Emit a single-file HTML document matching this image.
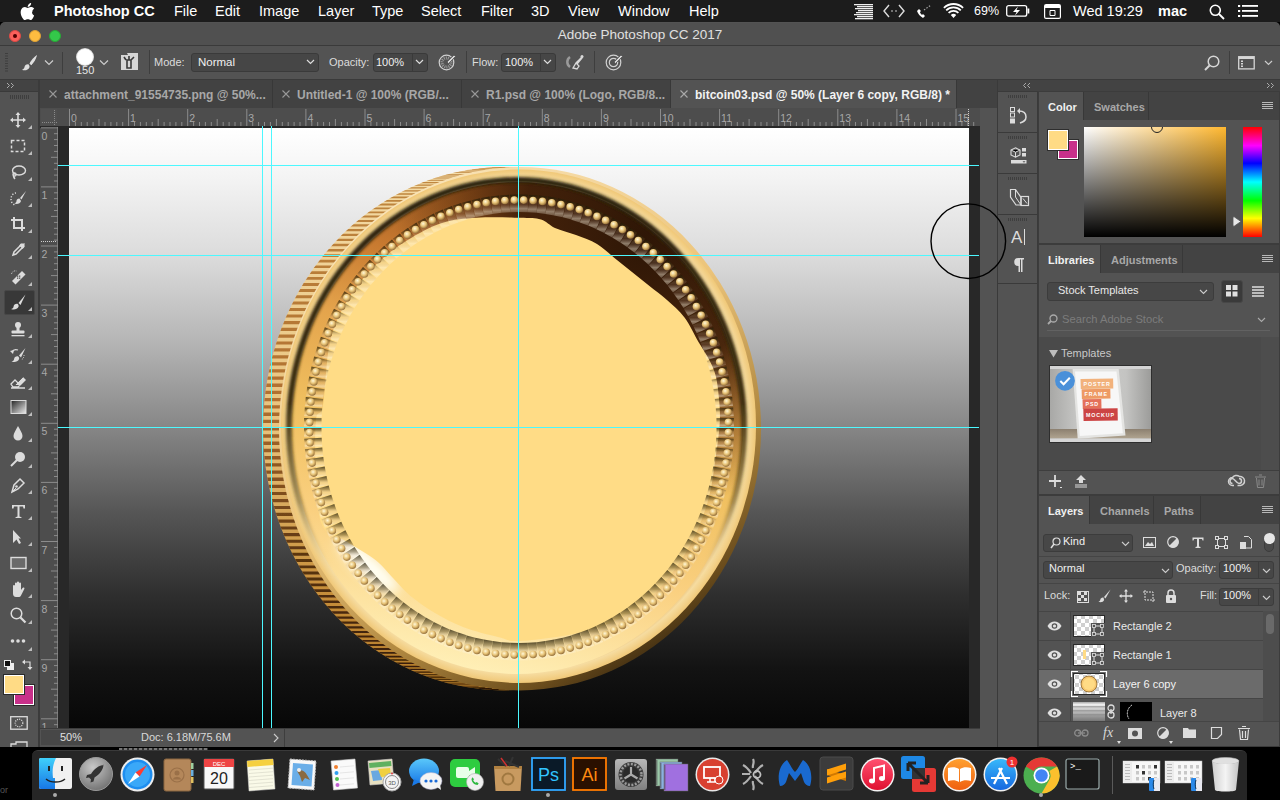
<!DOCTYPE html>
<html><head><meta charset="utf-8">
<style>
*{margin:0;padding:0;box-sizing:border-box}
html,body{width:1280px;height:800px;overflow:hidden;background:#000;font-family:"Liberation Sans",sans-serif;}
.a{position:absolute}
.t{position:absolute;white-space:nowrap;line-height:1}
svg{position:absolute;overflow:visible}
</style></head><body>

<div class="a" style="left:0;top:0;width:1280px;height:22px;background:#1c1c1c"></div>
<div class="t" style="left:54px;top:4px;font-size:14.5px;color:#fff;font-weight:bold;">Photoshop CC</div>
<div class="t" style="left:174px;top:4px;font-size:14.5px;color:#fff;">File</div>
<div class="t" style="left:215px;top:4px;font-size:14.5px;color:#fff;">Edit</div>
<div class="t" style="left:259px;top:4px;font-size:14.5px;color:#fff;">Image</div>
<div class="t" style="left:318px;top:4px;font-size:14.5px;color:#fff;">Layer</div>
<div class="t" style="left:372px;top:4px;font-size:14.5px;color:#fff;">Type</div>
<div class="t" style="left:421px;top:4px;font-size:14.5px;color:#fff;">Select</div>
<div class="t" style="left:481px;top:4px;font-size:14.5px;color:#fff;">Filter</div>
<div class="t" style="left:531px;top:4px;font-size:14.5px;color:#fff;">3D</div>
<div class="t" style="left:568px;top:4px;font-size:14.5px;color:#fff;">View</div>
<div class="t" style="left:618px;top:4px;font-size:14.5px;color:#fff;">Window</div>
<div class="t" style="left:689px;top:4px;font-size:14.5px;color:#fff;">Help</div>
<svg style="left:20px;top:3px" width="15" height="17" viewBox="0 0 15 17"><path fill="#fff" d="M12.3 9.1c0-2.2 1.8-3.2 1.9-3.3-1-1.5-2.6-1.7-3.2-1.7-1.4-.1-2.6.8-3.3.8-.7 0-1.7-.8-2.8-.8C3.5 4.1 2.2 5 1.4 6.3c-1.5 2.6-.4 6.5 1.1 8.6.7 1 1.5 2.2 2.6 2.1 1.1 0 1.4-.7 2.7-.7s1.6.7 2.7.7c1.1 0 1.8-1 2.5-2.1.8-1.200 1.1-2.300 1.1-2.400 0 0-2.100-.8-2.100-3.400zM10.2 2.800c.6-.7 1-1.700.9-2.700-.9 0-1.900.6-2.500 1.300-.5.600-1 1.600-.9 2.600 1 .1 1.900-.5 2.500-1.200z"/></svg>
<div class="t" style="left:974px;top:5px;font-size:12.5px;color:#fff">69%</div>
<div class="t" style="left:1073px;top:4px;font-size:14.5px;color:#fff">Wed 19:29</div>
<div class="t" style="left:1158px;top:4px;font-size:14.5px;color:#fff;font-weight:bold">mac</div>
<svg style="left:854px;top:4px" width="20" height="15"><rect x="0" y="0" width="19" height="1.3" fill="#eee"/><rect x="3" y="2" width="16" height="1.3" fill="#eee"/><rect x="1" y="4" width="18" height="1.3" fill="#eee"/><rect x="4" y="6" width="15" height="1.3" fill="#eee"/><rect x="2" y="8" width="17" height="1.3" fill="#eee"/><rect x="0" y="10" width="19" height="1.3" fill="#eee"/><rect x="3" y="12" width="16" height="1.3" fill="#eee"/><rect x="1" y="14" width="18" height="1.3" fill="#eee"/></svg>
<svg style="left:883px;top:4px" width="22" height="14"><path d="M6 1L1 7l5 6M16 1l5 6-5 6" stroke="#ddd" stroke-width="1.4" fill="none"/><circle cx="9" cy="7" r=".8" fill="#ddd"/><circle cx="13" cy="7" r=".8" fill="#ddd"/></svg>
<svg style="left:915px;top:4px" width="18" height="15"><path d="M2 7c1 3 3 5 6 7l2-2-2-2-1 1c-1-1-2-2-2-3l1-1-2-2z" fill="#fff"/><path d="M9 6l7-5" stroke="#aaa" stroke-width="1.2" stroke-dasharray="1.5 1.5"/></svg>
<svg style="left:943px;top:4px" width="21" height="15"><path d="M10.5 14L7.8 11a3.8 3.8 0 0 1 5.4 0z" fill="#fff"/><path d="M5.6 8.8a7 7 0 0 1 9.800 0M3.200 6.300a10.500 10.500 0 0 1 14.600 0M0.900 3.800a14 14 0 0 1 19.200 0" stroke="#fff" stroke-width="1.8" fill="none"/></svg>
<svg style="left:1006px;top:5px" width="24" height="12"><rect x=".7" y=".7" width="20" height="10.5" rx="2" stroke="#fff" stroke-width="1.3" fill="none"/><rect x="21.5" y="3.5" width="1.8" height="5" fill="#fff"/><path d="M12 1.5L7 7h3.5L9 10.5 14 5h-3.5z" fill="#fff"/></svg>
<svg style="left:1044px;top:4px" width="17" height="15"><rect x=".6" y=".6" width="15.8" height="13.8" rx="1.5" stroke="#fff" stroke-width="1.2" fill="none"/><rect x="1" y="1" width="15" height="3" fill="#fff"/><path d="M6 6.5h5v5H6z" stroke="#fff" stroke-width="1" fill="none"/></svg>
<svg style="left:1209px;top:4px" width="16" height="16"><circle cx="6.300" cy="6.300" r="5" stroke="#fff" stroke-width="1.6" fill="none"/><path d="M10 10l5 5" stroke="#fff" stroke-width="1.8"/></svg>
<svg style="left:1238px;top:4px" width="20" height="14"><g fill="#fff"><rect x="0" y="1" width="2.2" height="2"/><rect x="0" y="6" width="2.2" height="2"/><rect x="0" y="11" width="2.2" height="2"/><rect x="4" y="1" width="16" height="1.800"/><rect x="4" y="6" width="16" height="1.800"/><rect x="4" y="11" width="16" height="1.800"/></g></svg>
<div class="a" style="left:0;top:22px;width:1280px;height:725px;background:#535353;border-radius:5px 5px 0 0"></div>
<div class="a" style="left:0;top:23px;width:1280px;height:22px;background:#505050;border-radius:5px 5px 0 0"></div>
<div class="a" style="left:0;top:45px;width:1280px;height:1px;background:#3a3a3a"></div>
<div class="t" style="left:0;width:1280px;text-align:center;top:28px;font-size:13.5px;color:#e0e0e0">Adobe Photoshop CC 2017</div>
<div class="a" style="left:9px;top:30px;width:12px;height:12px;border-radius:50%;background:#fc605b;border:.5px solid #de4a45"></div>
<div class="a" style="left:29px;top:30px;width:12px;height:12px;border-radius:50%;background:#fdbc40;border:.5px solid #dea236"></div>
<div class="a" style="left:49px;top:30px;width:12px;height:12px;border-radius:50%;background:#34c84a;border:.5px solid #27aa35"></div>
<div class="a" style="left:13px;top:34px;width:4px;height:4px;border-radius:50%;background:#4d0000"></div>
<div class="a" style="left:0;top:46px;width:1280px;height:33px;background:#535353"></div>
<div class="a" style="left:0;top:79px;width:1280px;height:1px;background:#3a3a3a"></div>
<svg style="left:5px;top:53px" width="4" height="19"><rect x="0" y="0.0" width="3" height="1" fill="#3e3e3e"/><rect x="0" y="2.5" width="3" height="1" fill="#3e3e3e"/><rect x="0" y="5.0" width="3" height="1" fill="#3e3e3e"/><rect x="0" y="7.5" width="3" height="1" fill="#3e3e3e"/><rect x="0" y="10.0" width="3" height="1" fill="#3e3e3e"/><rect x="0" y="12.5" width="3" height="1" fill="#3e3e3e"/><rect x="0" y="15.0" width="3" height="1" fill="#3e3e3e"/><rect x="0" y="17.5" width="3" height="1" fill="#3e3e3e"/></svg>
<svg style="left:21px;top:54px" width="17" height="17" viewBox="0 0 17 17"><path d="M16 1L8.500 9.500 10.300 11.200z" fill="#dedede"/><path d="M7.500 10.200c-2.200-.3-3.800 1-4 2.800-.2 1.500-1.200 2.500-2.700 2.800 3 1.200 6.500.300 7.600-2.300.4-1 .1-2.100-.9-3.300z" fill="#dedede"/><path d="M16 1C13 3 10 6 8.700 9.300l1.600 1.600C13 9 15 5 16 1z" fill="#dedede"/></svg>
<svg style="left:44px;top:59px" width="10" height="7"><path d="M1 1.500l4 4 4-4" stroke="#ccc" stroke-width="1.2" fill="none"/></svg>
<div class="a" style="left:62px;top:52px;width:1px;height:22px;background:#3e3e3e"></div>
<div class="a" style="left:76px;top:48px;width:18px;height:18px;border-radius:50%;background:radial-gradient(circle,#fff 0%,#fff 58%,rgba(230,230,230,.7) 75%,rgba(200,200,200,0) 100%)"></div>
<div class="t" style="left:76px;top:65px;font-size:11px;color:#e6e6e6">150</div>
<svg style="left:99px;top:59px" width="10" height="7"><path d="M1 1.500l4 4 4-4" stroke="#ccc" stroke-width="1.2" fill="none"/></svg>
<div class="a" style="left:121px;top:53px;width:17px;height:17px;background:#d6d6d6"></div>
<svg style="left:121px;top:53px" width="17" height="17"><path d="M0 0h6l1 2H0z" fill="#535353"/><path d="M6 7v8h4V7zM5 7L3 4M8 7V3M10 7l3-3" stroke="#3a3a3a" stroke-width="1.6" fill="none"/></svg>
<div class="a" style="left:149px;top:50px;width:1px;height:24px;background:#3e3e3e"></div>
<div class="t" style="left:154px;top:57px;font-size:11px;color:#dcdcdc">Mode:</div>
<div class="a" style="left:191px;top:53px;width:128px;height:19px;background:#464646;border:1px solid #3a3a3a;border-radius:3px"></div>
<div class="t" style="left:198px;top:57px;font-size:11.5px;color:#f0f0f0">Normal</div>
<svg style="left:306px;top:59px" width="9" height="6"><path d="M1 1l3.500 3.500L8 1" stroke="#ddd" stroke-width="1.2" fill="none"/></svg>
<div class="t" style="left:329px;top:57px;font-size:11px;color:#dcdcdc">Opacity:</div>
<div class="a" style="left:373px;top:53px;width:55px;height:19px;background:#464646;border:1px solid #3a3a3a;border-radius:3px"></div>
<div class="a" style="left:412px;top:54px;width:1px;height:17px;background:#3a3a3a"></div>
<div class="t" style="left:376px;top:57px;font-size:11px;color:#f0f0f0">100%</div>
<svg style="left:415px;top:59px" width="9" height="6"><path d="M1 1l3.500 3.500L8 1" stroke="#ddd" stroke-width="1.2" fill="none"/></svg>
<svg style="left:438px;top:53px" width="18" height="18"><circle cx="8.500" cy="9.500" r="7.300" stroke="#d0d0d0" stroke-width="1.200" fill="none"/><circle cx="8.500" cy="9.500" r="4.500" stroke="#9a9a9a" stroke-width="3" fill="none" stroke-dasharray="1 1"/><path d="M9 9l7-7 1.500 1.500-7 7z" fill="#d8d8d8" stroke="#535353" stroke-width=".8"/></svg>
<div class="a" style="left:466px;top:51px;width:1px;height:22px;background:#3e3e3e"></div>
<div class="t" style="left:472px;top:57px;font-size:11px;color:#dcdcdc">Flow:</div>
<div class="a" style="left:501px;top:53px;width:55px;height:19px;background:#464646;border:1px solid #3a3a3a;border-radius:3px"></div>
<div class="a" style="left:540px;top:54px;width:1px;height:17px;background:#3a3a3a"></div>
<div class="t" style="left:505px;top:57px;font-size:11px;color:#f0f0f0">100%</div>
<svg style="left:543px;top:59px" width="9" height="6"><path d="M1 1l3.500 3.500L8 1" stroke="#ddd" stroke-width="1.2" fill="none"/></svg>
<svg style="left:565px;top:54px" width="20" height="17"><path d="M5 3a6 6 0 0 0 0 10" stroke="#9a9a9a" stroke-width="2.500" fill="none"/><path d="M17 3l-6 6-3 5 4 1 2-3-2-2 5-6z" stroke="#d8d8d8" stroke-width="1.300" fill="none"/><circle cx="17" cy="2.500" r="1.500" fill="#d8d8d8"/></svg>
<div class="a" style="left:594px;top:51px;width:1px;height:22px;background:#3e3e3e"></div>
<svg style="left:605px;top:53px" width="18" height="18"><circle cx="8.500" cy="9.500" r="7.300" stroke="#d0d0d0" stroke-width="1.200" fill="none"/><circle cx="8.500" cy="9.500" r="4.200" stroke="#d0d0d0" stroke-width="1.200" fill="none"/><path d="M9 9l7-7 1.500 1.500-7 7z" fill="#d8d8d8" stroke="#535353" stroke-width=".8"/></svg>
<svg style="left:1204px;top:55px" width="16" height="16"><circle cx="9.500" cy="6.500" r="5.300" stroke="#d6d6d6" stroke-width="1.500" fill="none"/><path d="M5.500 10.500L1 15" stroke="#d6d6d6" stroke-width="2"/></svg>
<div class="a" style="left:1229px;top:51px;width:1px;height:23px;background:#3e3e3e"></div>
<svg style="left:1238px;top:56px" width="17" height="14"><rect x=".7" y=".7" width="15.500" height="12.200" stroke="#d6d6d6" stroke-width="1.300" fill="none"/><rect x="1" y="1" width="15" height="2" fill="#d6d6d6"/><rect x="3" y="4.500" width="2" height="1.500" fill="#d6d6d6"/><rect x="3" y="7" width="2" height="1.500" fill="#d6d6d6"/><rect x="3" y="9.500" width="2" height="1.500" fill="#d6d6d6"/></svg>
<svg style="left:1264px;top:60px" width="9" height="6"><path d="M1 1l3.500 3.500L8 1" stroke="#ccc" stroke-width="1.200" fill="none"/></svg>
<div class="a" style="left:0;top:80px;width:38px;height:11px;background:#434343"></div>
<div class="a" style="left:0;top:91px;width:38px;height:1px;background:#3a3a3a"></div>
<div class="a" style="left:38px;top:80px;width:2px;height:667px;background:#3b3b3b"></div>
<svg style="left:6px;top:82px" width="9" height="7"><path d="M1 1l2.500 2.500L1 6M5 1l2.500 2.500L5 6" stroke="#aaa" stroke-width="1" fill="none"/></svg>
<svg style="left:10px;top:95px" width="20" height="5"><rect x="0" y="0" width="1" height="4" fill="#3e3e3e"/><rect x="2" y="0" width="1" height="4" fill="#3e3e3e"/><rect x="4" y="0" width="1" height="4" fill="#3e3e3e"/><rect x="6" y="0" width="1" height="4" fill="#3e3e3e"/><rect x="8" y="0" width="1" height="4" fill="#3e3e3e"/><rect x="10" y="0" width="1" height="4" fill="#3e3e3e"/><rect x="12" y="0" width="1" height="4" fill="#3e3e3e"/><rect x="14" y="0" width="1" height="4" fill="#3e3e3e"/><rect x="16" y="0" width="1" height="4" fill="#3e3e3e"/><rect x="18" y="0" width="1" height="4" fill="#3e3e3e"/></svg>
<div class="a" style="left:4px;top:290px;width:31px;height:25px;background:#383838;border:1px solid #474747;border-radius:2px"></div>
<svg style="left:10px;top:112px" width="17" height="17" viewBox="0 0 17 17"><path d="M8 1v14M1 8h14" stroke="#dcdcdc" stroke-width="1.600"/><path d="M8 0l-2.500 3h5zM8 16l-2.500-3h5zM0 8l3-2.500v5zM16 8l-3-2.500v5z" fill="#dcdcdc"/></svg>
<svg style="left:28px;top:125px" width="4" height="4"><path d="M4 0v4H0z" fill="#bdbdbd"/></svg>
<svg style="left:10px;top:138px" width="17" height="17" viewBox="0 0 17 17"><rect x="1.500" y="2.500" width="13" height="11" stroke="#dcdcdc" stroke-width="1.500" fill="none" stroke-dasharray="3 2"/></svg>
<svg style="left:28px;top:151px" width="4" height="4"><path d="M4 0v4H0z" fill="#bdbdbd"/></svg>
<svg style="left:10px;top:164px" width="17" height="17" viewBox="0 0 17 17"><ellipse cx="9" cy="6.500" rx="6.500" ry="4.500" stroke="#dcdcdc" stroke-width="1.400" fill="none"/><path d="M4 10c-1 2 0 4 1 5" stroke="#dcdcdc" stroke-width="1.400" fill="none"/><circle cx="4.500" cy="10.500" r="1.600" stroke="#dcdcdc" stroke-width="1.200" fill="none"/></svg>
<svg style="left:28px;top:177px" width="4" height="4"><path d="M4 0v4H0z" fill="#bdbdbd"/></svg>
<svg style="left:10px;top:190px" width="17" height="17" viewBox="0 0 17 17"><path d="M6 3a5 6 0 1 0 0 12" stroke="#dcdcdc" stroke-width="1.400" fill="none" stroke-dasharray="1.200 1.600"/><path d="M16 1l-6 7 1.500 1.500z" fill="#dcdcdc"/><path d="M9.500 8.500c-2 0-3 1.200-3 2.500 0 1.200-1 2-2 2.500 2.500 1 6 0 6.500-2.500z" fill="#dcdcdc"/></svg>
<svg style="left:28px;top:203px" width="4" height="4"><path d="M4 0v4H0z" fill="#bdbdbd"/></svg>
<svg style="left:10px;top:216px" width="17" height="17" viewBox="0 0 17 17"><path d="M4 1v11h11M1 4h11v11" stroke="#dcdcdc" stroke-width="2" fill="none"/></svg>
<svg style="left:28px;top:229px" width="4" height="4"><path d="M4 0v4H0z" fill="#bdbdbd"/></svg>
<svg style="left:10px;top:242px" width="17" height="17" viewBox="0 0 17 17"><path d="M14.500 1.500l-3 3M12 2l2 2-8 8-3 1 1-3z" stroke="#dcdcdc" stroke-width="1.500" fill="none"/><path d="M10 2.500l3.500 3.500" stroke="#dcdcdc" stroke-width="2.500"/></svg>
<svg style="left:28px;top:255px" width="4" height="4"><path d="M4 0v4H0z" fill="#bdbdbd"/></svg>
<svg style="left:10px;top:269px" width="17" height="17" viewBox="0 0 17 17"><path d="M2 12l10-10 3.500 3.500-10 10z" fill="#dcdcdc"/><g fill="#535353"><rect x="7" y="6.500" width="1.300" height="1.300"/><rect x="9" y="6.500" width="1.300" height="1.300"/><rect x="7" y="8.500" width="1.300" height="1.300"/><rect x="9" y="8.500" width="1.300" height="1.300"/></g><path d="M1.500 5a4 4 0 0 1 5-3" stroke="#dcdcdc" stroke-width="1" fill="none" stroke-dasharray="1 1"/></svg>
<svg style="left:28px;top:282px" width="4" height="4"><path d="M4 0v4H0z" fill="#bdbdbd"/></svg>
<svg style="left:10px;top:294px" width="17" height="17" viewBox="0 0 17 17"><path d="M15.500 .5L8.500 9l2 2z" fill="#dcdcdc"/><path d="M7.500 9.800c-2.200-.300-3.600 1-3.900 2.600-.2 1.500-1.100 2.300-2.600 2.600 3 1.200 6.300.3 7.500-2.200.4-1 .1-2-1-3z" fill="#dcdcdc"/></svg>
<svg style="left:28px;top:307px" width="4" height="4"><path d="M4 0v4H0z" fill="#bdbdbd"/></svg>
<svg style="left:10px;top:321px" width="17" height="17" viewBox="0 0 17 17"><circle cx="8" cy="4" r="3" fill="#dcdcdc"/><rect x="6.500" y="6" width="3" height="4" fill="#dcdcdc"/><rect x="1.500" y="9.500" width="13" height="3" rx="1" fill="#dcdcdc"/><rect x="1.500" y="14" width="13" height="1.300" fill="#dcdcdc"/></svg>
<svg style="left:28px;top:334px" width="4" height="4"><path d="M4 0v4H0z" fill="#bdbdbd"/></svg>
<svg style="left:10px;top:347px" width="17" height="17" viewBox="0 0 17 17"><path d="M15.500 1L9 8.500l2 2z" fill="#dcdcdc"/><path d="M8 9.300c-2.200-.3-3.600 1-3.900 2.600-.2 1.500-1.100 2.300-2.600 2.600 3 1.200 6.300.3 7.500-2.200.4-1 .1-2-1-3z" fill="#dcdcdc"/><path d="M8 3C5 2 3 3 2 5" stroke="#dcdcdc" stroke-width="1.300" fill="none"/><path d="M0 4l3 3 1-4z" fill="#dcdcdc"/><path d="M14 8a5 5 0 0 1-3 5" stroke="#dcdcdc" stroke-width="1" stroke-dasharray="1 1" fill="none"/></svg>
<svg style="left:28px;top:360px" width="4" height="4"><path d="M4 0v4H0z" fill="#bdbdbd"/></svg>
<svg style="left:10px;top:373px" width="17" height="17" viewBox="0 0 17 17"><path d="M5 12L13 4l3 3-5 5z" fill="#dcdcdc"/><path d="M5 12L13 4" stroke="#535353" stroke-width=".8"/><path d="M1 11l4-4 5 5-2 2H3zM1 15h14" stroke="#dcdcdc" stroke-width="1.300" fill="none"/></svg>
<svg style="left:28px;top:386px" width="4" height="4"><path d="M4 0v4H0z" fill="#bdbdbd"/></svg>
<svg style="left:10px;top:399px" width="17" height="17" viewBox="0 0 17 17"><defs><linearGradient id="tg" x1="0" y1="0" x2="1" y2="1"><stop offset="0" stop-color="#222"/><stop offset="1" stop-color="#eee"/></linearGradient></defs><rect x="1" y="1.500" width="15" height="13" fill="url(#tg)" stroke="#dcdcdc" stroke-width="1"/></svg>
<svg style="left:28px;top:412px" width="4" height="4"><path d="M4 0v4H0z" fill="#bdbdbd"/></svg>
<svg style="left:10px;top:425px" width="17" height="17" viewBox="0 0 17 17"><path d="M8 1C6 5 3.500 8 3.500 11a4.500 4.500 0 0 0 9 0C12.500 8 10 5 8 1z" fill="#dcdcdc"/></svg>
<svg style="left:28px;top:438px" width="4" height="4"><path d="M4 0v4H0z" fill="#bdbdbd"/></svg>
<svg style="left:10px;top:451px" width="17" height="17" viewBox="0 0 17 17"><circle cx="10" cy="6" r="5" fill="#dcdcdc"/><path d="M7 9l-6 6" stroke="#dcdcdc" stroke-width="2"/></svg>
<svg style="left:28px;top:464px" width="4" height="4"><path d="M4 0v4H0z" fill="#bdbdbd"/></svg>
<svg style="left:10px;top:477px" width="17" height="17" viewBox="0 0 17 17"><path d="M2 15l2-7 6-6 4 4-6 6z" stroke="#dcdcdc" stroke-width="1.500" fill="none"/><circle cx="6.500" cy="9.500" r="1.300" fill="#dcdcdc"/><path d="M2 15l4-4" stroke="#dcdcdc" stroke-width="1"/></svg>
<svg style="left:28px;top:490px" width="4" height="4"><path d="M4 0v4H0z" fill="#bdbdbd"/></svg>
<svg style="left:10px;top:503px" width="17" height="17" viewBox="0 0 17 17"><path d="M2 2h13v3.500h-1.500L13 3.500H9.500v10l2 .8V15H5.500v-.700l2-.800v-10H4l-.500 2H2z" fill="#dcdcdc"/></svg>
<svg style="left:28px;top:516px" width="4" height="4"><path d="M4 0v4H0z" fill="#bdbdbd"/></svg>
<svg style="left:10px;top:529px" width="17" height="17" viewBox="0 0 17 17"><path d="M3 1v13l3.500-3.500L9 15l2-1-2.500-4.500H11z" fill="#dcdcdc"/></svg>
<svg style="left:28px;top:542px" width="4" height="4"><path d="M4 0v4H0z" fill="#bdbdbd"/></svg>
<svg style="left:10px;top:555px" width="17" height="17" viewBox="0 0 17 17"><rect x="1" y="2.500" width="15" height="11" stroke="#dcdcdc" stroke-width="1.400" fill="#6a6a6a"/></svg>
<svg style="left:28px;top:568px" width="4" height="4"><path d="M4 0v4H0z" fill="#bdbdbd"/></svg>
<svg style="left:10px;top:581px" width="17" height="17" viewBox="0 0 17 17"><path d="M3 9V5a1 1 0 0 1 2 0v3V2.500a1 1 0 0 1 2 0V8V1.500a1 1 0 0 1 2 0V8V2.500a1 1 0 0 1 2 0V9l1.500-2a1 1 0 0 1 1.800 1L11 14.500c-.5 1-1.500 1.500-2.500 1.500H6c-2 0-3-1.500-3-3.500z" fill="#dcdcdc"/></svg>
<svg style="left:28px;top:594px" width="4" height="4"><path d="M4 0v4H0z" fill="#bdbdbd"/></svg>
<svg style="left:10px;top:607px" width="17" height="17" viewBox="0 0 17 17"><circle cx="6.500" cy="6.500" r="5.300" stroke="#dcdcdc" stroke-width="1.500" fill="none"/><path d="M10.500 10.500L15.500 15.500" stroke="#dcdcdc" stroke-width="2.200"/></svg>
<svg style="left:28px;top:620px" width="4" height="4"><path d="M4 0v4H0z" fill="#bdbdbd"/></svg>
<svg style="left:10px;top:633px" width="17" height="17" viewBox="0 0 17 17"><circle cx="2.500" cy="8" r="1.800" fill="#dcdcdc"/><circle cx="8" cy="8" r="1.800" fill="#dcdcdc"/><circle cx="13.500" cy="8" r="1.800" fill="#dcdcdc"/></svg>
<svg style="left:28px;top:647px" width="4" height="4"><path d="M4 0v4H0z" fill="#bdbdbd"/></svg>
<div class="a" style="left:7px;top:663px;width:7px;height:7px;background:#eee"></div>
<div class="a" style="left:4px;top:660px;width:7px;height:7px;background:#111;border:1px solid #eee"></div>
<svg style="left:22px;top:659px" width="11" height="11"><path d="M2 3h6v6" stroke="#ddd" stroke-width="1.200" fill="none"/><path d="M0 3l3-2.500v5zM8 11l-2.500-3h5z" fill="#ddd"/></svg>
<div class="a" style="left:14px;top:685px;width:20px;height:20px;background:#c8308a;border:1px solid #fff;outline:1px solid #2a2a2a"></div>
<div class="a" style="left:4px;top:675px;width:20px;height:19px;background:#ffdb85;border:1px solid #fff;outline:1px solid #2a2a2a"></div>
<svg style="left:10px;top:716px" width="18" height="14"><rect x=".700" y=".700" width="16.500" height="12.500" stroke="#dcdcdc" stroke-width="1.300" fill="none"/><circle cx="9" cy="7" r="3.800" stroke="#dcdcdc" stroke-width="1.200" fill="none" stroke-dasharray="1.100 1.100"/></svg>
<svg style="left:10px;top:741px" width="18" height="6"><path d="M1 6V3h5V1h11v5" stroke="#dcdcdc" stroke-width="1.300" fill="none"/></svg>
<div class="a" style="left:40px;top:80px;width:958px;height:28px;background:#424242"></div>
<div class="a" style="left:40px;top:80px;width:233px;height:28px;background:#424242;border-right:1px solid #383838"></div>
<svg style="left:49px;top:90px" width="8" height="8"><path d="M.5 .5l7 7M7.5 .5l-7 7" stroke="#999" stroke-width="1.100"/></svg>
<div class="t" style="left:64px;top:89px;font-size:12px;font-weight:bold;color:#a8a8a8">attachment_91554735.png @ 50%...</div>
<div class="a" style="left:273px;top:80px;width:189px;height:28px;background:#424242;border-right:1px solid #383838"></div>
<svg style="left:282px;top:90px" width="8" height="8"><path d="M.5 .5l7 7M7.5 .5l-7 7" stroke="#999" stroke-width="1.100"/></svg>
<div class="t" style="left:297px;top:89px;font-size:12px;font-weight:bold;color:#a8a8a8">Untitled-1 @ 100% (RGB/...</div>
<div class="a" style="left:462px;top:80px;width:209px;height:28px;background:#424242;border-right:1px solid #383838"></div>
<svg style="left:471px;top:90px" width="8" height="8"><path d="M.5 .5l7 7M7.5 .5l-7 7" stroke="#999" stroke-width="1.100"/></svg>
<div class="t" style="left:486px;top:89px;font-size:12px;font-weight:bold;color:#a8a8a8">R1.psd @ 100% (Logo, RGB/8...</div>
<div class="a" style="left:671px;top:80px;width:286px;height:28px;background:#535353;border-right:1px solid #383838"></div>
<svg style="left:680px;top:90px" width="8" height="8"><path d="M.5 .5l7 7M7.5 .5l-7 7" stroke="#aaa" stroke-width="1.100"/></svg>
<div class="t" style="left:695px;top:89px;font-size:12px;font-weight:bold;color:#f2f2f2">bitcoin03.psd @ 50% (Layer 6 copy, RGB/8) *</div>
<div class="a" style="left:40px;top:108px;width:940px;height:19px;background:#4d4d4d"></div>
<div class="a" style="left:40px;top:108px;width:18px;height:620px;background:#4d4d4d"></div>
<div class="a" style="left:41px;top:109px;width:16px;height:16px;background:#505050"></div>
<svg style="left:41px;top:109px" width="17" height="17"><path d="M13.500 1v15M1 13.500h15" stroke="#8a8a8a" stroke-width="1" stroke-dasharray="1 1"/></svg>
<div class="a" style="left:40px;top:126px;width:940px;height:2px;background:#2a2a2a"></div>
<div class="a" style="left:57px;top:127px;width:1px;height:601px;background:#7a7a7a"></div>
<svg style="left:0;top:0;clip-path:inset(108px 0 72px 0)" width="1280" height="800"><path d="M69.5 109v17" stroke="#8c8c8c" stroke-width="1"/><text x="71.0" y="122" font-size="10.5" fill="#a8a8a8" font-family="Liberation Sans">0</text><path d="M75.4 122v4" stroke="#8c8c8c" stroke-width="1"/><path d="M81.3 122v4" stroke="#8c8c8c" stroke-width="1"/><path d="M87.2 122v4" stroke="#8c8c8c" stroke-width="1"/><path d="M93.1 122v4" stroke="#8c8c8c" stroke-width="1"/><path d="M99.0 119v7" stroke="#8c8c8c" stroke-width="1"/><path d="M105.0 122v4" stroke="#8c8c8c" stroke-width="1"/><path d="M110.9 122v4" stroke="#8c8c8c" stroke-width="1"/><path d="M116.8 122v4" stroke="#8c8c8c" stroke-width="1"/><path d="M122.7 122v4" stroke="#8c8c8c" stroke-width="1"/><path d="M128.6 109v17" stroke="#8c8c8c" stroke-width="1"/><text x="130.1" y="122" font-size="10.5" fill="#a8a8a8" font-family="Liberation Sans">1</text><path d="M134.5 122v4" stroke="#8c8c8c" stroke-width="1"/><path d="M140.4 122v4" stroke="#8c8c8c" stroke-width="1"/><path d="M146.3 122v4" stroke="#8c8c8c" stroke-width="1"/><path d="M152.2 122v4" stroke="#8c8c8c" stroke-width="1"/><path d="M158.2 119v7" stroke="#8c8c8c" stroke-width="1"/><path d="M164.1 122v4" stroke="#8c8c8c" stroke-width="1"/><path d="M170.0 122v4" stroke="#8c8c8c" stroke-width="1"/><path d="M175.9 122v4" stroke="#8c8c8c" stroke-width="1"/><path d="M181.8 122v4" stroke="#8c8c8c" stroke-width="1"/><path d="M187.7 109v17" stroke="#8c8c8c" stroke-width="1"/><text x="189.2" y="122" font-size="10.5" fill="#a8a8a8" font-family="Liberation Sans">2</text><path d="M193.6 122v4" stroke="#8c8c8c" stroke-width="1"/><path d="M199.5 122v4" stroke="#8c8c8c" stroke-width="1"/><path d="M205.4 122v4" stroke="#8c8c8c" stroke-width="1"/><path d="M211.3 122v4" stroke="#8c8c8c" stroke-width="1"/><path d="M217.2 119v7" stroke="#8c8c8c" stroke-width="1"/><path d="M223.2 122v4" stroke="#8c8c8c" stroke-width="1"/><path d="M229.1 122v4" stroke="#8c8c8c" stroke-width="1"/><path d="M235.0 122v4" stroke="#8c8c8c" stroke-width="1"/><path d="M240.9 122v4" stroke="#8c8c8c" stroke-width="1"/><path d="M246.8 109v17" stroke="#8c8c8c" stroke-width="1"/><text x="248.3" y="122" font-size="10.5" fill="#a8a8a8" font-family="Liberation Sans">3</text><path d="M252.7 122v4" stroke="#8c8c8c" stroke-width="1"/><path d="M258.6 122v4" stroke="#8c8c8c" stroke-width="1"/><path d="M264.5 122v4" stroke="#8c8c8c" stroke-width="1"/><path d="M270.4 122v4" stroke="#8c8c8c" stroke-width="1"/><path d="M276.4 119v7" stroke="#8c8c8c" stroke-width="1"/><path d="M282.3 122v4" stroke="#8c8c8c" stroke-width="1"/><path d="M288.2 122v4" stroke="#8c8c8c" stroke-width="1"/><path d="M294.1 122v4" stroke="#8c8c8c" stroke-width="1"/><path d="M300.0 122v4" stroke="#8c8c8c" stroke-width="1"/><path d="M305.9 109v17" stroke="#8c8c8c" stroke-width="1"/><text x="307.4" y="122" font-size="10.5" fill="#a8a8a8" font-family="Liberation Sans">4</text><path d="M311.8 122v4" stroke="#8c8c8c" stroke-width="1"/><path d="M317.7 122v4" stroke="#8c8c8c" stroke-width="1"/><path d="M323.6 122v4" stroke="#8c8c8c" stroke-width="1"/><path d="M329.5 122v4" stroke="#8c8c8c" stroke-width="1"/><path d="M335.4 119v7" stroke="#8c8c8c" stroke-width="1"/><path d="M341.4 122v4" stroke="#8c8c8c" stroke-width="1"/><path d="M347.3 122v4" stroke="#8c8c8c" stroke-width="1"/><path d="M353.2 122v4" stroke="#8c8c8c" stroke-width="1"/><path d="M359.1 122v4" stroke="#8c8c8c" stroke-width="1"/><path d="M365.0 109v17" stroke="#8c8c8c" stroke-width="1"/><text x="366.5" y="122" font-size="10.5" fill="#a8a8a8" font-family="Liberation Sans">5</text><path d="M370.9 122v4" stroke="#8c8c8c" stroke-width="1"/><path d="M376.8 122v4" stroke="#8c8c8c" stroke-width="1"/><path d="M382.7 122v4" stroke="#8c8c8c" stroke-width="1"/><path d="M388.6 122v4" stroke="#8c8c8c" stroke-width="1"/><path d="M394.6 119v7" stroke="#8c8c8c" stroke-width="1"/><path d="M400.5 122v4" stroke="#8c8c8c" stroke-width="1"/><path d="M406.4 122v4" stroke="#8c8c8c" stroke-width="1"/><path d="M412.3 122v4" stroke="#8c8c8c" stroke-width="1"/><path d="M418.2 122v4" stroke="#8c8c8c" stroke-width="1"/><path d="M424.1 109v17" stroke="#8c8c8c" stroke-width="1"/><text x="425.6" y="122" font-size="10.5" fill="#a8a8a8" font-family="Liberation Sans">6</text><path d="M430.0 122v4" stroke="#8c8c8c" stroke-width="1"/><path d="M435.9 122v4" stroke="#8c8c8c" stroke-width="1"/><path d="M441.8 122v4" stroke="#8c8c8c" stroke-width="1"/><path d="M447.7 122v4" stroke="#8c8c8c" stroke-width="1"/><path d="M453.6 119v7" stroke="#8c8c8c" stroke-width="1"/><path d="M459.6 122v4" stroke="#8c8c8c" stroke-width="1"/><path d="M465.5 122v4" stroke="#8c8c8c" stroke-width="1"/><path d="M471.4 122v4" stroke="#8c8c8c" stroke-width="1"/><path d="M477.3 122v4" stroke="#8c8c8c" stroke-width="1"/><path d="M483.2 109v17" stroke="#8c8c8c" stroke-width="1"/><text x="484.7" y="122" font-size="10.5" fill="#a8a8a8" font-family="Liberation Sans">7</text><path d="M489.1 122v4" stroke="#8c8c8c" stroke-width="1"/><path d="M495.0 122v4" stroke="#8c8c8c" stroke-width="1"/><path d="M500.9 122v4" stroke="#8c8c8c" stroke-width="1"/><path d="M506.8 122v4" stroke="#8c8c8c" stroke-width="1"/><path d="M512.8 119v7" stroke="#8c8c8c" stroke-width="1"/><path d="M518.7 122v4" stroke="#8c8c8c" stroke-width="1"/><path d="M524.6 122v4" stroke="#8c8c8c" stroke-width="1"/><path d="M530.5 122v4" stroke="#8c8c8c" stroke-width="1"/><path d="M536.4 122v4" stroke="#8c8c8c" stroke-width="1"/><path d="M542.3 109v17" stroke="#8c8c8c" stroke-width="1"/><text x="543.8" y="122" font-size="10.5" fill="#a8a8a8" font-family="Liberation Sans">8</text><path d="M548.2 122v4" stroke="#8c8c8c" stroke-width="1"/><path d="M554.1 122v4" stroke="#8c8c8c" stroke-width="1"/><path d="M560.0 122v4" stroke="#8c8c8c" stroke-width="1"/><path d="M565.9 122v4" stroke="#8c8c8c" stroke-width="1"/><path d="M571.9 119v7" stroke="#8c8c8c" stroke-width="1"/><path d="M577.8 122v4" stroke="#8c8c8c" stroke-width="1"/><path d="M583.7 122v4" stroke="#8c8c8c" stroke-width="1"/><path d="M589.6 122v4" stroke="#8c8c8c" stroke-width="1"/><path d="M595.5 122v4" stroke="#8c8c8c" stroke-width="1"/><path d="M601.4 109v17" stroke="#8c8c8c" stroke-width="1"/><text x="602.9" y="122" font-size="10.5" fill="#a8a8a8" font-family="Liberation Sans">9</text><path d="M607.3 122v4" stroke="#8c8c8c" stroke-width="1"/><path d="M613.2 122v4" stroke="#8c8c8c" stroke-width="1"/><path d="M619.1 122v4" stroke="#8c8c8c" stroke-width="1"/><path d="M625.0 122v4" stroke="#8c8c8c" stroke-width="1"/><path d="M631.0 119v7" stroke="#8c8c8c" stroke-width="1"/><path d="M636.9 122v4" stroke="#8c8c8c" stroke-width="1"/><path d="M642.8 122v4" stroke="#8c8c8c" stroke-width="1"/><path d="M648.7 122v4" stroke="#8c8c8c" stroke-width="1"/><path d="M654.6 122v4" stroke="#8c8c8c" stroke-width="1"/><path d="M660.5 109v17" stroke="#8c8c8c" stroke-width="1"/><text x="662.0" y="122" font-size="10.5" fill="#a8a8a8" font-family="Liberation Sans">10</text><path d="M666.4 122v4" stroke="#8c8c8c" stroke-width="1"/><path d="M672.3 122v4" stroke="#8c8c8c" stroke-width="1"/><path d="M678.2 122v4" stroke="#8c8c8c" stroke-width="1"/><path d="M684.1 122v4" stroke="#8c8c8c" stroke-width="1"/><path d="M690.0 119v7" stroke="#8c8c8c" stroke-width="1"/><path d="M696.0 122v4" stroke="#8c8c8c" stroke-width="1"/><path d="M701.9 122v4" stroke="#8c8c8c" stroke-width="1"/><path d="M707.8 122v4" stroke="#8c8c8c" stroke-width="1"/><path d="M713.7 122v4" stroke="#8c8c8c" stroke-width="1"/><path d="M719.6 109v17" stroke="#8c8c8c" stroke-width="1"/><text x="721.1" y="122" font-size="10.5" fill="#a8a8a8" font-family="Liberation Sans">11</text><path d="M725.5 122v4" stroke="#8c8c8c" stroke-width="1"/><path d="M731.4 122v4" stroke="#8c8c8c" stroke-width="1"/><path d="M737.3 122v4" stroke="#8c8c8c" stroke-width="1"/><path d="M743.2 122v4" stroke="#8c8c8c" stroke-width="1"/><path d="M749.1 119v7" stroke="#8c8c8c" stroke-width="1"/><path d="M755.1 122v4" stroke="#8c8c8c" stroke-width="1"/><path d="M761.0 122v4" stroke="#8c8c8c" stroke-width="1"/><path d="M766.9 122v4" stroke="#8c8c8c" stroke-width="1"/><path d="M772.8 122v4" stroke="#8c8c8c" stroke-width="1"/><path d="M778.7 109v17" stroke="#8c8c8c" stroke-width="1"/><text x="780.2" y="122" font-size="10.5" fill="#a8a8a8" font-family="Liberation Sans">12</text><path d="M784.6 122v4" stroke="#8c8c8c" stroke-width="1"/><path d="M790.5 122v4" stroke="#8c8c8c" stroke-width="1"/><path d="M796.4 122v4" stroke="#8c8c8c" stroke-width="1"/><path d="M802.3 122v4" stroke="#8c8c8c" stroke-width="1"/><path d="M808.2 119v7" stroke="#8c8c8c" stroke-width="1"/><path d="M814.2 122v4" stroke="#8c8c8c" stroke-width="1"/><path d="M820.1 122v4" stroke="#8c8c8c" stroke-width="1"/><path d="M826.0 122v4" stroke="#8c8c8c" stroke-width="1"/><path d="M831.9 122v4" stroke="#8c8c8c" stroke-width="1"/><path d="M837.8 109v17" stroke="#8c8c8c" stroke-width="1"/><text x="839.3" y="122" font-size="10.5" fill="#a8a8a8" font-family="Liberation Sans">13</text><path d="M843.7 122v4" stroke="#8c8c8c" stroke-width="1"/><path d="M849.6 122v4" stroke="#8c8c8c" stroke-width="1"/><path d="M855.5 122v4" stroke="#8c8c8c" stroke-width="1"/><path d="M861.4 122v4" stroke="#8c8c8c" stroke-width="1"/><path d="M867.4 119v7" stroke="#8c8c8c" stroke-width="1"/><path d="M873.3 122v4" stroke="#8c8c8c" stroke-width="1"/><path d="M879.2 122v4" stroke="#8c8c8c" stroke-width="1"/><path d="M885.1 122v4" stroke="#8c8c8c" stroke-width="1"/><path d="M891.0 122v4" stroke="#8c8c8c" stroke-width="1"/><path d="M896.9 109v17" stroke="#8c8c8c" stroke-width="1"/><text x="898.4" y="122" font-size="10.5" fill="#a8a8a8" font-family="Liberation Sans">14</text><path d="M902.8 122v4" stroke="#8c8c8c" stroke-width="1"/><path d="M908.7 122v4" stroke="#8c8c8c" stroke-width="1"/><path d="M914.6 122v4" stroke="#8c8c8c" stroke-width="1"/><path d="M920.5 122v4" stroke="#8c8c8c" stroke-width="1"/><path d="M926.5 119v7" stroke="#8c8c8c" stroke-width="1"/><path d="M932.4 122v4" stroke="#8c8c8c" stroke-width="1"/><path d="M938.3 122v4" stroke="#8c8c8c" stroke-width="1"/><path d="M944.2 122v4" stroke="#8c8c8c" stroke-width="1"/><path d="M950.1 122v4" stroke="#8c8c8c" stroke-width="1"/><path d="M956.0 109v17" stroke="#8c8c8c" stroke-width="1"/><text x="957.5" y="122" font-size="10.5" fill="#a8a8a8" font-family="Liberation Sans">15</text><path d="M961.9 122v4" stroke="#8c8c8c" stroke-width="1"/><path d="M967.8 122v4" stroke="#8c8c8c" stroke-width="1"/><path d="M973.7 122v4" stroke="#8c8c8c" stroke-width="1"/><path d="M41 127.8h17" stroke="#8c8c8c" stroke-width="1"/><text x="41.500" y="139.8" font-size="10.5" fill="#a8a8a8" font-family="Liberation Sans">0</text><path d="M54 133.7h4" stroke="#8c8c8c" stroke-width="1"/><path d="M54 139.6h4" stroke="#8c8c8c" stroke-width="1"/><path d="M54 145.5h4" stroke="#8c8c8c" stroke-width="1"/><path d="M54 151.4h4" stroke="#8c8c8c" stroke-width="1"/><path d="M51 157.3h7" stroke="#8c8c8c" stroke-width="1"/><path d="M54 163.3h4" stroke="#8c8c8c" stroke-width="1"/><path d="M54 169.2h4" stroke="#8c8c8c" stroke-width="1"/><path d="M54 175.1h4" stroke="#8c8c8c" stroke-width="1"/><path d="M54 181.0h4" stroke="#8c8c8c" stroke-width="1"/><path d="M41 186.9h17" stroke="#8c8c8c" stroke-width="1"/><text x="41.500" y="198.9" font-size="10.5" fill="#a8a8a8" font-family="Liberation Sans">1</text><path d="M54 192.8h4" stroke="#8c8c8c" stroke-width="1"/><path d="M54 198.7h4" stroke="#8c8c8c" stroke-width="1"/><path d="M54 204.6h4" stroke="#8c8c8c" stroke-width="1"/><path d="M54 210.5h4" stroke="#8c8c8c" stroke-width="1"/><path d="M51 216.4h7" stroke="#8c8c8c" stroke-width="1"/><path d="M54 222.4h4" stroke="#8c8c8c" stroke-width="1"/><path d="M54 228.3h4" stroke="#8c8c8c" stroke-width="1"/><path d="M54 234.2h4" stroke="#8c8c8c" stroke-width="1"/><path d="M54 240.1h4" stroke="#8c8c8c" stroke-width="1"/><path d="M41 246.0h17" stroke="#8c8c8c" stroke-width="1"/><text x="41.500" y="258.0" font-size="10.5" fill="#a8a8a8" font-family="Liberation Sans">2</text><path d="M54 251.9h4" stroke="#8c8c8c" stroke-width="1"/><path d="M54 257.8h4" stroke="#8c8c8c" stroke-width="1"/><path d="M54 263.7h4" stroke="#8c8c8c" stroke-width="1"/><path d="M54 269.6h4" stroke="#8c8c8c" stroke-width="1"/><path d="M51 275.6h7" stroke="#8c8c8c" stroke-width="1"/><path d="M54 281.5h4" stroke="#8c8c8c" stroke-width="1"/><path d="M54 287.4h4" stroke="#8c8c8c" stroke-width="1"/><path d="M54 293.3h4" stroke="#8c8c8c" stroke-width="1"/><path d="M54 299.2h4" stroke="#8c8c8c" stroke-width="1"/><path d="M41 305.1h17" stroke="#8c8c8c" stroke-width="1"/><text x="41.500" y="317.1" font-size="10.5" fill="#a8a8a8" font-family="Liberation Sans">3</text><path d="M54 311.0h4" stroke="#8c8c8c" stroke-width="1"/><path d="M54 316.9h4" stroke="#8c8c8c" stroke-width="1"/><path d="M54 322.8h4" stroke="#8c8c8c" stroke-width="1"/><path d="M54 328.7h4" stroke="#8c8c8c" stroke-width="1"/><path d="M51 334.6h7" stroke="#8c8c8c" stroke-width="1"/><path d="M54 340.6h4" stroke="#8c8c8c" stroke-width="1"/><path d="M54 346.5h4" stroke="#8c8c8c" stroke-width="1"/><path d="M54 352.4h4" stroke="#8c8c8c" stroke-width="1"/><path d="M54 358.3h4" stroke="#8c8c8c" stroke-width="1"/><path d="M41 364.2h17" stroke="#8c8c8c" stroke-width="1"/><text x="41.500" y="376.2" font-size="10.5" fill="#a8a8a8" font-family="Liberation Sans">4</text><path d="M54 370.1h4" stroke="#8c8c8c" stroke-width="1"/><path d="M54 376.0h4" stroke="#8c8c8c" stroke-width="1"/><path d="M54 381.9h4" stroke="#8c8c8c" stroke-width="1"/><path d="M54 387.8h4" stroke="#8c8c8c" stroke-width="1"/><path d="M51 393.8h7" stroke="#8c8c8c" stroke-width="1"/><path d="M54 399.7h4" stroke="#8c8c8c" stroke-width="1"/><path d="M54 405.6h4" stroke="#8c8c8c" stroke-width="1"/><path d="M54 411.5h4" stroke="#8c8c8c" stroke-width="1"/><path d="M54 417.4h4" stroke="#8c8c8c" stroke-width="1"/><path d="M41 423.3h17" stroke="#8c8c8c" stroke-width="1"/><text x="41.500" y="435.3" font-size="10.5" fill="#a8a8a8" font-family="Liberation Sans">5</text><path d="M54 429.2h4" stroke="#8c8c8c" stroke-width="1"/><path d="M54 435.1h4" stroke="#8c8c8c" stroke-width="1"/><path d="M54 441.0h4" stroke="#8c8c8c" stroke-width="1"/><path d="M54 446.9h4" stroke="#8c8c8c" stroke-width="1"/><path d="M51 452.9h7" stroke="#8c8c8c" stroke-width="1"/><path d="M54 458.8h4" stroke="#8c8c8c" stroke-width="1"/><path d="M54 464.7h4" stroke="#8c8c8c" stroke-width="1"/><path d="M54 470.6h4" stroke="#8c8c8c" stroke-width="1"/><path d="M54 476.5h4" stroke="#8c8c8c" stroke-width="1"/><path d="M41 482.4h17" stroke="#8c8c8c" stroke-width="1"/><text x="41.500" y="494.4" font-size="10.5" fill="#a8a8a8" font-family="Liberation Sans">6</text><path d="M54 488.3h4" stroke="#8c8c8c" stroke-width="1"/><path d="M54 494.2h4" stroke="#8c8c8c" stroke-width="1"/><path d="M54 500.1h4" stroke="#8c8c8c" stroke-width="1"/><path d="M54 506.0h4" stroke="#8c8c8c" stroke-width="1"/><path d="M51 511.9h7" stroke="#8c8c8c" stroke-width="1"/><path d="M54 517.9h4" stroke="#8c8c8c" stroke-width="1"/><path d="M54 523.8h4" stroke="#8c8c8c" stroke-width="1"/><path d="M54 529.7h4" stroke="#8c8c8c" stroke-width="1"/><path d="M54 535.6h4" stroke="#8c8c8c" stroke-width="1"/><path d="M41 541.5h17" stroke="#8c8c8c" stroke-width="1"/><text x="41.500" y="553.5" font-size="10.5" fill="#a8a8a8" font-family="Liberation Sans">7</text><path d="M54 547.4h4" stroke="#8c8c8c" stroke-width="1"/><path d="M54 553.3h4" stroke="#8c8c8c" stroke-width="1"/><path d="M54 559.2h4" stroke="#8c8c8c" stroke-width="1"/><path d="M54 565.1h4" stroke="#8c8c8c" stroke-width="1"/><path d="M51 571.0h7" stroke="#8c8c8c" stroke-width="1"/><path d="M54 577.0h4" stroke="#8c8c8c" stroke-width="1"/><path d="M54 582.9h4" stroke="#8c8c8c" stroke-width="1"/><path d="M54 588.8h4" stroke="#8c8c8c" stroke-width="1"/><path d="M54 594.7h4" stroke="#8c8c8c" stroke-width="1"/><path d="M41 600.6h17" stroke="#8c8c8c" stroke-width="1"/><text x="41.500" y="612.6" font-size="10.5" fill="#a8a8a8" font-family="Liberation Sans">8</text><path d="M54 606.5h4" stroke="#8c8c8c" stroke-width="1"/><path d="M54 612.4h4" stroke="#8c8c8c" stroke-width="1"/><path d="M54 618.3h4" stroke="#8c8c8c" stroke-width="1"/><path d="M54 624.2h4" stroke="#8c8c8c" stroke-width="1"/><path d="M51 630.1h7" stroke="#8c8c8c" stroke-width="1"/><path d="M54 636.1h4" stroke="#8c8c8c" stroke-width="1"/><path d="M54 642.0h4" stroke="#8c8c8c" stroke-width="1"/><path d="M54 647.9h4" stroke="#8c8c8c" stroke-width="1"/><path d="M54 653.8h4" stroke="#8c8c8c" stroke-width="1"/><path d="M41 659.7h17" stroke="#8c8c8c" stroke-width="1"/><text x="41.500" y="671.7" font-size="10.5" fill="#a8a8a8" font-family="Liberation Sans">9</text><path d="M54 665.6h4" stroke="#8c8c8c" stroke-width="1"/><path d="M54 671.5h4" stroke="#8c8c8c" stroke-width="1"/><path d="M54 677.4h4" stroke="#8c8c8c" stroke-width="1"/><path d="M54 683.3h4" stroke="#8c8c8c" stroke-width="1"/><path d="M51 689.2h7" stroke="#8c8c8c" stroke-width="1"/><path d="M54 695.2h4" stroke="#8c8c8c" stroke-width="1"/><path d="M54 701.1h4" stroke="#8c8c8c" stroke-width="1"/><path d="M54 707.0h4" stroke="#8c8c8c" stroke-width="1"/><path d="M54 712.9h4" stroke="#8c8c8c" stroke-width="1"/><path d="M41 718.8h17" stroke="#8c8c8c" stroke-width="1"/><text x="41.500" y="730.8" font-size="10.5" fill="#a8a8a8" font-family="Liberation Sans">1</text><text x="41.500" y="740.8" font-size="10.5" fill="#a8a8a8" font-family="Liberation Sans">0</text><path d="M54 724.7h4" stroke="#8c8c8c" stroke-width="1"/><path d="M41 241.5h16" stroke="#cfcfcf" stroke-width="1" stroke-dasharray="1 1"/><path d="M968.5 109v17" stroke="#cfcfcf" stroke-width="1" stroke-dasharray="1 1"/></svg>
<div class="a" style="left:58px;top:126px;width:922px;height:602px;background:#282828"></div>
<div class="a" style="left:69px;top:128px;width:900px;height:600px;background:linear-gradient(#ffffff 0%,#f4f4f4 8%,#dadada 22%,#b4b4b4 36%,#868686 50%,#565656 64%,#2e2e2e 78%,#131313 90%,#070707 100%)"></div>
<div class="a" style="left:980px;top:108px;width:17px;height:639px;background:#535353"></div>
<div class="a" style="left:997px;top:80px;width:1px;height:667px;background:#3a3a3a"></div>
<div class="a" style="left:40px;top:728px;width:940px;height:19px;background:#535353;border-top:1px solid #3c3c3c"></div>
<div class="a" style="left:41px;top:730px;width:59px;height:15px;background:#474747"></div>
<div class="t" style="left:60px;top:732px;font-size:11px;color:#e0e0e0">50%</div>
<div class="t" style="left:141px;top:732px;font-size:11px;color:#d8d8d8">Doc: 6.18M/75.6M</div>
<svg style="left:273px;top:733px" width="6" height="10"><path d="M1 1l4 4-4 4" stroke="#ccc" stroke-width="1.100" fill="none"/></svg>
<div class="a" style="left:284px;top:729px;width:1px;height:18px;background:#3e3e3e"></div>
<div class="a" style="left:998px;top:80px;width:282px;height:11px;background:#434343"></div>
<svg style="left:1022px;top:82px" width="9" height="7"><path d="M4 1L1.500 3.500 4 6M8 1L5.500 3.500 8 6" stroke="#aaa" stroke-width="1" fill="none"/></svg>
<svg style="left:1266px;top:82px" width="9" height="7"><path d="M1 1l2.500 2.500L1 6M5 1l2.500 2.500L5 6" stroke="#aaa" stroke-width="1" fill="none"/></svg>
<div class="a" style="left:998px;top:91px;width:39px;height:656px;background:#535353"></div>
<div class="a" style="left:1037px;top:91px;width:1px;height:656px;background:#3a3a3a"></div>
<div class="a" style="left:998px;top:91px;width:39px;height:1px;background:#3a3a3a"></div>
<div class="a" style="left:998px;top:132px;width:39px;height:1px;background:#3a3a3a"></div>
<div class="a" style="left:998px;top:173px;width:39px;height:1px;background:#3a3a3a"></div>
<div class="a" style="left:998px;top:214px;width:39px;height:1px;background:#3a3a3a"></div>
<div class="a" style="left:998px;top:283px;width:39px;height:1px;background:#3a3a3a"></div>
<svg style="left:1008px;top:95px" width="20" height="4"><rect x="0" y="0" width="1" height="3" fill="#3e3e3e"/><rect x="2" y="0" width="1" height="3" fill="#3e3e3e"/><rect x="4" y="0" width="1" height="3" fill="#3e3e3e"/><rect x="6" y="0" width="1" height="3" fill="#3e3e3e"/><rect x="8" y="0" width="1" height="3" fill="#3e3e3e"/><rect x="10" y="0" width="1" height="3" fill="#3e3e3e"/><rect x="12" y="0" width="1" height="3" fill="#3e3e3e"/><rect x="14" y="0" width="1" height="3" fill="#3e3e3e"/><rect x="16" y="0" width="1" height="3" fill="#3e3e3e"/><rect x="18" y="0" width="1" height="3" fill="#3e3e3e"/></svg>
<svg style="left:1008px;top:136px" width="20" height="4"><rect x="0" y="0" width="1" height="3" fill="#3e3e3e"/><rect x="2" y="0" width="1" height="3" fill="#3e3e3e"/><rect x="4" y="0" width="1" height="3" fill="#3e3e3e"/><rect x="6" y="0" width="1" height="3" fill="#3e3e3e"/><rect x="8" y="0" width="1" height="3" fill="#3e3e3e"/><rect x="10" y="0" width="1" height="3" fill="#3e3e3e"/><rect x="12" y="0" width="1" height="3" fill="#3e3e3e"/><rect x="14" y="0" width="1" height="3" fill="#3e3e3e"/><rect x="16" y="0" width="1" height="3" fill="#3e3e3e"/><rect x="18" y="0" width="1" height="3" fill="#3e3e3e"/></svg>
<svg style="left:1008px;top:177px" width="20" height="4"><rect x="0" y="0" width="1" height="3" fill="#3e3e3e"/><rect x="2" y="0" width="1" height="3" fill="#3e3e3e"/><rect x="4" y="0" width="1" height="3" fill="#3e3e3e"/><rect x="6" y="0" width="1" height="3" fill="#3e3e3e"/><rect x="8" y="0" width="1" height="3" fill="#3e3e3e"/><rect x="10" y="0" width="1" height="3" fill="#3e3e3e"/><rect x="12" y="0" width="1" height="3" fill="#3e3e3e"/><rect x="14" y="0" width="1" height="3" fill="#3e3e3e"/><rect x="16" y="0" width="1" height="3" fill="#3e3e3e"/><rect x="18" y="0" width="1" height="3" fill="#3e3e3e"/></svg>
<svg style="left:1008px;top:218px" width="20" height="4"><rect x="0" y="0" width="1" height="3" fill="#3e3e3e"/><rect x="2" y="0" width="1" height="3" fill="#3e3e3e"/><rect x="4" y="0" width="1" height="3" fill="#3e3e3e"/><rect x="6" y="0" width="1" height="3" fill="#3e3e3e"/><rect x="8" y="0" width="1" height="3" fill="#3e3e3e"/><rect x="10" y="0" width="1" height="3" fill="#3e3e3e"/><rect x="12" y="0" width="1" height="3" fill="#3e3e3e"/><rect x="14" y="0" width="1" height="3" fill="#3e3e3e"/><rect x="16" y="0" width="1" height="3" fill="#3e3e3e"/><rect x="18" y="0" width="1" height="3" fill="#3e3e3e"/></svg>
<svg style="left:1010px;top:107px" width="18" height="17"><g fill="none" stroke="#dcdcdc" stroke-width="1"><rect x=".5" y=".5" width="4" height="4"/><rect x=".5" y="6" width="4" height="4"/></g><rect x="0" y="11.500" width="5" height="5" fill="#dcdcdc"/><path d="M9 4c4 0 7 2 7 6s-3 5-6 6" stroke="#dcdcdc" stroke-width="1.500" fill="none"/><path d="M7 4l3-3v6z" fill="#dcdcdc"/></svg>
<svg style="left:1010px;top:147px" width="18" height="18"><path d="M5.500 .8l4.500 2.200v5l-4.500 2.200L1 8V3z" stroke="#dcdcdc" stroke-width="1.100" fill="none"/><path d="M1 3l4.500 2.200L10 3M5.500 5.200v5" stroke="#dcdcdc" stroke-width="1"/><rect x="12" y="1" width="4" height="3.500" fill="#dcdcdc"/><rect x="12" y="6" width="4" height="3.500" fill="#dcdcdc"/><rect x="1" y="13" width="15.500" height="3.500" fill="#dcdcdc"/><path d="M12.500 14.200h3l-1.500 1.600z" fill="#535353"/></svg>
<svg style="left:1009px;top:188px" width="21" height="19"><path d="M1.500 1.500h5l5.500 8v7.500h-5L1.500 9z" stroke="#dcdcdc" stroke-width="1.200" fill="none"/><path d="M6.500 1.500v7.500l5.500 8" stroke="#dcdcdc" stroke-width="1" fill="none"/><rect x="12" y="8.500" width="7.500" height="9" stroke="#dcdcdc" stroke-width="1.200" fill="none"/><path d="M14 10.500l4 5" stroke="#dcdcdc" stroke-width="1"/></svg>
<div class="t" style="left:1011px;top:229px;font-size:17px;color:#dcdcdc">A</div>
<div class="a" style="left:1024px;top:229px;width:1px;height:16px;background:#dcdcdc"></div>
<svg style="left:1012px;top:257px" width="13" height="16"><path d="M6 1h6v1.500h-1.500V15H9V2.500H8V15H6.500V9A4 4 0 0 1 6 1z" fill="#dcdcdc"/></svg>
<div class="a" style="left:1038px;top:91px;width:242px;height:656px;background:#3c3c3c"></div>
<div class="a" style="left:1039px;top:92px;width:240px;height:28px;background:#434343"></div>
<div class="a" style="left:1039px;top:92px;width:45px;height:28px;background:#535353;border-right:1px solid #383838"></div>
<div class="t" style="left:1048px;top:102px;font-size:11px;font-weight:bold;color:#f0f0f0">Color</div>
<div class="a" style="left:1085px;top:92px;width:64px;height:28px;background:#434343;border-right:1px solid #383838"></div>
<div class="t" style="left:1094px;top:102px;font-size:11px;font-weight:bold;color:#a8a8a8">Swatches</div>
<svg style="left:1262px;top:102px" width="11" height="8"><path d="M0 .5h11M0 2.500h11M0 4.500h11M0 6.500h11" stroke="#b8b8b8" stroke-width="1"/></svg>
<div class="a" style="left:1039px;top:120px;width:240px;height:123px;background:#535353"></div>
<div class="a" style="left:1058px;top:140px;width:20px;height:19px;background:#c8308a;border:1px solid #fff;outline:1px solid #2e2e2e"></div>
<div class="a" style="left:1048px;top:130px;width:20px;height:20px;background:#ffdb85;border:1px solid #fff;outline:1px solid #2e2e2e"></div>
<div class="a" style="left:1084px;top:127px;width:142px;height:110px;background:linear-gradient(to bottom,rgba(0,0,0,0),#000),linear-gradient(to right,#fff,#ffb830)"></div>
<div class="a" style="left:1084px;top:127px;width:142px;height:110px;overflow:hidden"><div class="a" style="left:67px;top:-6px;width:12px;height:12px;border-radius:50%;border:1.300px solid #222"></div></div>
<div class="a" style="left:1243px;top:127px;width:19px;height:110px;background:linear-gradient(#ff0000 0%,#ff00ff 17%,#0000ff 33%,#00ffff 50%,#00ff00 67%,#ffff00 83%,#ff0000 100%)"></div>
<svg style="left:1232px;top:216px" width="10" height="11"><path d="M1 2a1 1 0 0 1 1.500-1L9 5.500 2.500 10A1 1 0 0 1 1 9z" fill="#e8e8e8" stroke="#555" stroke-width=".8"/></svg>
<div class="a" style="left:1039px;top:245px;width:240px;height:28px;background:#434343"></div>
<div class="a" style="left:1039px;top:245px;width:62px;height:28px;background:#535353;border-right:1px solid #383838"></div>
<div class="t" style="left:1048px;top:255px;font-size:11px;font-weight:bold;color:#f0f0f0">Libraries</div>
<div class="a" style="left:1102px;top:245px;width:81px;height:28px;background:#434343;border-right:1px solid #383838"></div>
<div class="t" style="left:1111px;top:255px;font-size:11px;font-weight:bold;color:#a8a8a8">Adjustments</div>
<svg style="left:1262px;top:255px" width="11" height="8"><path d="M0 .5h11M0 2.500h11M0 4.500h11M0 6.500h11" stroke="#b8b8b8" stroke-width="1"/></svg>
<div class="a" style="left:1039px;top:273px;width:240px;height:64px;background:#535353"></div>
<div class="a" style="left:1047px;top:282px;width:167px;height:19px;background:#474747;border:1px solid #3c3c3c;border-radius:3px"></div>
<div class="t" style="left:1058px;top:285px;font-size:11px;color:#e8e8e8">Stock Templates</div>
<svg style="left:1199px;top:289px" width="9" height="6"><path d="M1 1l3.500 3.500L8 1" stroke="#ccc" stroke-width="1.100" fill="none"/></svg>
<div class="a" style="left:1221px;top:280px;width:22px;height:23px;background:#3a3a3a;border:1px solid #474747;border-radius:3px"></div>
<svg style="left:1226px;top:285px" width="12" height="12"><rect x="0" y="0" width="5" height="5" fill="#e0e0e0"/><rect x="6.500" y="0" width="5" height="5" fill="#e0e0e0"/><rect x="0" y="6.500" width="5" height="5" fill="#e0e0e0"/><rect x="6.500" y="6.500" width="5" height="5" fill="#e0e0e0"/></svg>
<svg style="left:1252px;top:286px" width="12" height="11"><path d="M0 1h12M0 4h12M0 7h12M0 10h12" stroke="#e0e0e0" stroke-width="1.500"/></svg>
<svg style="left:1047px;top:314px" width="11" height="11"><circle cx="6.500" cy="4.500" r="3.500" stroke="#aaa" stroke-width="1.300" fill="none"/><path d="M4 7l-3 3" stroke="#aaa" stroke-width="1.800"/></svg>
<div class="t" style="left:1062px;top:314px;font-size:11.2px;color:#7c7c7c">Search Adobe Stock</div>
<svg style="left:1257px;top:317px" width="9" height="6"><path d="M1 1l3.500 3.500L8 1" stroke="#aaa" stroke-width="1.100" fill="none"/></svg>
<div class="a" style="left:1047px;top:330px;width:223px;height:1px;background:#626262"></div>
<div class="a" style="left:1039px;top:337px;width:240px;height:133px;background:#4a4a4a"></div>
<div class="a" style="left:1261px;top:337px;width:18px;height:133px;background:#4d4d4d"></div>
<svg style="left:1049px;top:350px" width="9" height="8"><path d="M0 0h9L4.500 7.500z" fill="#bdbdbd"/></svg>
<div class="t" style="left:1061px;top:348px;font-size:11px;color:#c8c8c8">Templates</div>
<svg style="left:1049px;top:365px" width="103" height="78" viewBox="0 0 103 78">
<defs><linearGradient id="wall" x1="0" y1="0" x2="1" y2="0"><stop offset="0" stop-color="#a8a8a6"/><stop offset=".35" stop-color="#cfcfcd"/><stop offset=".75" stop-color="#c4c4c2"/><stop offset="1" stop-color="#9c9c9a"/></linearGradient>
<linearGradient id="flr" x1="0" y1="0" x2="0" y2="1"><stop offset="0" stop-color="#8c8070"/><stop offset="1" stop-color="#b0a490"/></linearGradient></defs>
<rect x="0" y="0" width="103" height="78" fill="#2e2e2e"/>
<rect x="1" y="1" width="101" height="76" fill="url(#wall)"/>
<rect x="1" y="1" width="101" height="3" fill="#d4d4d4"/>
<rect x="1" y="64" width="101" height="9.500" fill="url(#flr)"/>
<path d="M23.600 4H69.700L76.500 70.500 28.700 73.700z" fill="#e4e4e2"/>
<path d="M26 6.500H67.500L73.800 68.300 30.800 71z" fill="#f7f7f7"/>
<path d="M31.500 14.100L64.100 13.600 64.300 23.500 31.800 24z" fill="#f2b27c"/>
<path d="M32.600 24.200L61.300 23.800 61.500 33.600 32.900 34z" fill="#ee9a64"/>
<path d="M33.500 34.300L52.300 34.100 52.500 43.800 33.800 44z" fill="#e4705a"/>
<path d="M34.300 43.800L68.600 43.200 68.800 55.500 34.600 56z" fill="#cc4444"/>
<g font-family="Liberation Sans" font-weight="bold" font-size="5.300" fill="#fff" letter-spacing=".9"><text x="34.500" y="21.300">POSTER</text><text x="35.500" y="31.300">FRAME</text><text x="36.500" y="41.300">PSD</text><text x="37" y="52">MOCKUP</text></g>
<rect x="1" y="73.500" width="101" height="3.500" fill="#d6d6d6"/>
<circle cx="16" cy="15.800" r="9.900" fill="#4a90d9"/>
<path d="M11.300 16l3.300 3.300 6.200-6.500" stroke="#fff" stroke-width="2" fill="none"/>
</svg>
<div class="a" style="left:1039px;top:470px;width:240px;height:24px;background:#535353;border-top:1px solid #3e3e3e"></div>
<svg style="left:1049px;top:475px" width="14" height="14"><path d="M6 0v12M0 6h12" stroke="#dcdcdc" stroke-width="1.800"/><rect x="11" y="12" width="2" height="1" fill="#dcdcdc"/></svg>
<svg style="left:1075px;top:475px" width="12" height="13"><path d="M6 0l5 5H8v3H4V5H1z" fill="#dcdcdc"/><path d="M0 10h12M0 12h12" stroke="#dcdcdc" stroke-width="1"/></svg>
<svg style="left:1228px;top:474px" width="17" height="14"><path d="M6 11.500H4.500a4 4 0 0 1 0-8C6 1.500 9 .5 11.500 2.500a4.500 4.500 0 0 1 1 9H9.500" stroke="#d0d0d0" stroke-width="1.500" fill="none"/><path d="M4.500 9.500a2.500 2.500 0 0 1 0-5c2 0 4 5 6.500 5a2.500 2.500 0 0 0 0-5" stroke="#d0d0d0" stroke-width="1.500" fill="none"/></svg>
<svg style="left:1255px;top:475px" width="11" height="13"><path d="M0 2h11M4 0h3M1.500 3l1 9.500h6l1-9.500M4 4.500v6M7 4.500v6" stroke="#8a8a8a" stroke-width="1" fill="none"/></svg>
<div class="a" style="left:1039px;top:496px;width:240px;height:28px;background:#434343"></div>
<div class="a" style="left:1039px;top:496px;width:51px;height:28px;background:#535353;border-right:1px solid #383838"></div>
<div class="t" style="left:1048px;top:506px;font-size:11px;font-weight:bold;color:#f0f0f0">Layers</div>
<div class="a" style="left:1091px;top:496px;width:63px;height:28px;background:#434343;border-right:1px solid #383838"></div>
<div class="t" style="left:1100px;top:506px;font-size:11px;font-weight:bold;color:#a8a8a8">Channels</div>
<div class="a" style="left:1155px;top:496px;width:46px;height:28px;background:#434343;border-right:1px solid #383838"></div>
<div class="t" style="left:1164px;top:506px;font-size:11px;font-weight:bold;color:#a8a8a8">Paths</div>
<svg style="left:1262px;top:506px" width="11" height="8"><path d="M0 .5h11M0 2.500h11M0 4.500h11M0 6.500h11" stroke="#b8b8b8" stroke-width="1"/></svg>
<div class="a" style="left:1039px;top:524px;width:240px;height:87px;background:#535353"></div>
<div class="a" style="left:1039px;top:556px;width:240px;height:1px;background:#454545"></div>
<div class="a" style="left:1039px;top:583px;width:240px;height:1px;background:#454545"></div>
<div class="a" style="left:1043px;top:534px;width:90px;height:18px;background:#474747;border:1px solid #3c3c3c;border-radius:3px"></div>
<svg style="left:1050px;top:537px" width="11" height="12"><circle cx="6.500" cy="4.500" r="3.500" stroke="#ddd" stroke-width="1.200" fill="none"/><path d="M4 7l-3 4" stroke="#ddd" stroke-width="1.600"/></svg>
<div class="t" style="left:1063px;top:536px;font-size:11px;color:#f0f0f0">Kind</div>
<svg style="left:1121px;top:541px" width="9" height="6"><path d="M1 1l3.500 3.500L8 1" stroke="#ccc" stroke-width="1.100" fill="none"/></svg>
<svg style="left:1143px;top:537px" width="13" height="11"><rect x=".5" y=".5" width="12" height="10" stroke="#ddd" stroke-width="1" fill="none"/><path d="M2 9l3-4 2 2 2-2 2 4z" fill="#ddd"/></svg>
<svg style="left:1167px;top:536px" width="12" height="12"><circle cx="6" cy="6" r="5.300" stroke="#ddd" stroke-width="1.200" fill="none"/><path d="M10 2L2 10a5.300 5.300 0 0 0 8-8z" fill="#ddd"/></svg>
<svg style="left:1192px;top:537px" width="12" height="11"><path d="M.5 .5h11v3h-1l-.5-1.500H7V9.500l1.500.5v1h-5v-1L5 9.500V2H2l-.5 1.500h-1z" fill="#ddd"/></svg>
<svg style="left:1215px;top:536px" width="13" height="13"><rect x="2.500" y="2.500" width="8" height="8" stroke="#ddd" stroke-width="1" fill="none"/><g fill="#535353" stroke="#ddd" stroke-width="1"><rect x=".5" y=".5" width="3" height="3"/><rect x="9.500" y=".5" width="3" height="3"/><rect x=".5" y="9.500" width="3" height="3"/><rect x="9.500" y="9.500" width="3" height="3"/></g></svg>
<svg style="left:1240px;top:536px" width="12" height="13"><path d="M4 .5h4.500l3 3V12H4" stroke="#ddd" stroke-width="1" fill="none"/><rect x="0" y="6" width="6" height="7" fill="#ddd"/></svg>
<div class="a" style="left:1264px;top:534px;width:10px;height:18px;border-radius:5px;border:1px solid #3c3c3c;background:#4a4a4a"></div>
<div class="a" style="left:1263.500px;top:533px;width:11px;height:11px;border-radius:50%;background:#e6e6e6"></div>
<div class="a" style="left:1043px;top:561px;width:130px;height:18px;background:#474747;border:1px solid #3c3c3c;border-radius:3px"></div>
<div class="t" style="left:1049px;top:563px;font-size:11px;color:#f0f0f0">Normal</div>
<svg style="left:1161px;top:568px" width="9" height="6"><path d="M1 1l3.500 3.500L8 1" stroke="#ccc" stroke-width="1.100" fill="none"/></svg>
<div class="t" style="left:1176px;top:563px;font-size:11px;color:#dcdcdc">Opacity:</div>
<div class="a" style="left:1219px;top:561px;width:55px;height:18px;background:#474747;border:1px solid #3c3c3c;border-radius:3px"></div>
<div class="a" style="left:1258px;top:562px;width:1px;height:16px;background:#3c3c3c"></div>
<div class="t" style="left:1223px;top:563px;font-size:11px;color:#f0f0f0">100%</div>
<svg style="left:1262px;top:568px" width="9" height="6"><path d="M1 1l3.500 3.500L8 1" stroke="#ccc" stroke-width="1.100" fill="none"/></svg>
<div class="a" style="left:1219px;top:588px;width:55px;height:18px;background:#474747;border:1px solid #3c3c3c;border-radius:3px"></div>
<div class="a" style="left:1258px;top:589px;width:1px;height:16px;background:#3c3c3c"></div>
<div class="t" style="left:1223px;top:590px;font-size:11px;color:#f0f0f0">100%</div>
<svg style="left:1262px;top:595px" width="9" height="6"><path d="M1 1l3.500 3.500L8 1" stroke="#ccc" stroke-width="1.100" fill="none"/></svg>
<div class="t" style="left:1044px;top:590px;font-size:11px;color:#dcdcdc">Lock:</div>
<div class="t" style="left:1200px;top:590px;font-size:11px;color:#dcdcdc">Fill:</div>
<svg style="left:1077px;top:591px" width="12" height="12"><rect x=".5" y=".5" width="11" height="11" stroke="#ddd" fill="none"/><g fill="#ddd"><rect x="1" y="1" width="3" height="3"/><rect x="7" y="1" width="3" height="3"/><rect x="4" y="4" width="3" height="3"/><rect x="1" y="7" width="3" height="3"/><rect x="7" y="7" width="3" height="3"/></g></svg>
<svg style="left:1098px;top:589px" width="13" height="14"><path d="M12.500 .5L6 8l1.500 1.500z" fill="#ddd"/><path d="M5.500 8.500c-1.800-.3-3 .8-3.200 2.200-.2 1-.8 1.800-2 2.100 2.500 1 5 .3 5.800-1.800z" fill="#ddd"/></svg>
<svg style="left:1119px;top:589px" width="14" height="14"><path d="M7 1v12M1 7h12" stroke="#ddd" stroke-width="1.300"/><path d="M7 0l-2 2.500h4zM7 14l-2-2.500h4zM0 7l2.500-2v4zM14 7l-2.500-2v4z" fill="#ddd"/></svg>
<svg style="left:1142px;top:589px" width="14" height="14"><path d="M3 1v10h10M1 3h10v10" stroke="#ddd" stroke-width="1" fill="none" stroke-dasharray="2 1"/></svg>
<svg style="left:1165px;top:589px" width="12" height="14"><path d="M3 6V4a3 3 0 0 1 6 0v2" stroke="#ddd" stroke-width="1.500" fill="none"/><rect x="1" y="6" width="10" height="8" rx="1" fill="#ddd"/><circle cx="6" cy="10" r="1.200" fill="#535353"/></svg>
<div class="a" style="left:1039px;top:611px;width:224px;height:110px;background:#535353"></div>
<div class="a" style="left:1263px;top:611px;width:16px;height:110px;background:#4d4d4d"></div>
<div class="a" style="left:1266px;top:614px;width:8px;height:20px;border-radius:4px;background:#6a6a6a"></div>
<div class="a" style="left:1039px;top:611px;width:224px;height:1px;background:#454545"></div>
<div class="a" style="left:1070px;top:611px;width:1px;height:29px;background:#454545"></div>
<svg style="left:1047px;top:621px" width="15" height="10"><path d="M.5 5C2.500 1.500 5 .5 7.500 .5S12.500 1.500 14.500 5C12.500 8.500 10 9.500 7.500 9.500S2.500 8.500 .5 5z" fill="#e0e0e0"/><circle cx="7.500" cy="5" r="2.800" fill="#535353"/><circle cx="7.500" cy="5" r="1.600" fill="#e0e0e0"/></svg>
<div class="a" style="left:1039px;top:640px;width:224px;height:1px;background:#454545"></div>
<div class="a" style="left:1070px;top:640px;width:1px;height:29px;background:#454545"></div>
<svg style="left:1047px;top:650px" width="15" height="10"><path d="M.5 5C2.500 1.500 5 .5 7.500 .5S12.500 1.500 14.500 5C12.500 8.500 10 9.500 7.500 9.500S2.500 8.500 .5 5z" fill="#e0e0e0"/><circle cx="7.500" cy="5" r="2.800" fill="#535353"/><circle cx="7.500" cy="5" r="1.600" fill="#e0e0e0"/></svg>
<div class="a" style="left:1039px;top:670px;width:224px;height:28px;background:#6b6b6b"></div>
<div class="a" style="left:1039px;top:669px;width:224px;height:1px;background:#454545"></div>
<div class="a" style="left:1070px;top:669px;width:1px;height:29px;background:#454545"></div>
<svg style="left:1047px;top:679px" width="15" height="10"><path d="M.5 5C2.500 1.500 5 .5 7.500 .5S12.500 1.500 14.500 5C12.500 8.500 10 9.500 7.500 9.500S2.500 8.500 .5 5z" fill="#e0e0e0"/><circle cx="7.500" cy="5" r="2.800" fill="#535353"/><circle cx="7.500" cy="5" r="1.600" fill="#e0e0e0"/></svg>
<div class="a" style="left:1039px;top:698px;width:224px;height:1px;background:#454545"></div>
<div class="a" style="left:1070px;top:698px;width:1px;height:29px;background:#454545"></div>
<svg style="left:1047px;top:708px" width="15" height="10"><path d="M.5 5C2.500 1.500 5 .5 7.500 .5S12.500 1.500 14.500 5C12.500 8.500 10 9.500 7.500 9.500S2.500 8.500 .5 5z" fill="#e0e0e0"/><circle cx="7.500" cy="5" r="2.800" fill="#535353"/><circle cx="7.500" cy="5" r="1.600" fill="#e0e0e0"/></svg>
<svg style="left:1073px;top:615px" width="32" height="22"><defs><pattern id="chk" width="8" height="8" patternUnits="userSpaceOnUse"><rect width="8" height="8" fill="#fff"/><rect width="4" height="4" fill="#cfcfcf"/><rect x="4" y="4" width="4" height="4" fill="#cfcfcf"/></pattern></defs><rect x=".5" y=".5" width="31" height="21" fill="url(#chk)" stroke="#2a2a2a"/><rect x="18" y="8" width="14" height="14" fill="#535353"/><rect x="21" y="11" width="8" height="8" stroke="#e0e0e0" fill="none"/><g fill="#535353" stroke="#e0e0e0" stroke-width=".8"><rect x="19.500" y="9.500" width="3" height="3"/><rect x="27.500" y="9.500" width="3" height="3"/><rect x="19.500" y="17.500" width="3" height="3"/><rect x="27.500" y="17.500" width="3" height="3"/></g></svg>
<svg style="left:1073px;top:644px" width="32" height="22"><defs><pattern id="chk" width="8" height="8" patternUnits="userSpaceOnUse"><rect width="8" height="8" fill="#fff"/><rect width="4" height="4" fill="#cfcfcf"/><rect x="4" y="4" width="4" height="4" fill="#cfcfcf"/></pattern></defs><rect x=".5" y=".5" width="31" height="21" fill="url(#chk)" stroke="#2a2a2a"/><rect x="10" y="6" width="3" height="9" fill="#ffdb85"/><rect x="18" y="8" width="14" height="14" fill="#535353"/><rect x="21" y="11" width="8" height="8" stroke="#e0e0e0" fill="none"/><g fill="#535353" stroke="#e0e0e0" stroke-width=".8"><rect x="19.500" y="9.500" width="3" height="3"/><rect x="27.500" y="9.500" width="3" height="3"/><rect x="19.500" y="17.500" width="3" height="3"/><rect x="27.500" y="17.500" width="3" height="3"/></g></svg>
<div class="t" style="left:1113px;top:621px;font-size:11px;color:#eaeaea">Rectangle 2</div>
<div class="t" style="left:1113px;top:650px;font-size:11px;color:#eaeaea">Rectangle 1</div>
<svg style="left:1071px;top:671px" width="36" height="26"><defs><pattern id="chk" width="8" height="8" patternUnits="userSpaceOnUse"><rect width="8" height="8" fill="#fff"/><rect width="4" height="4" fill="#cfcfcf"/><rect x="4" y="4" width="4" height="4" fill="#cfcfcf"/></pattern></defs><rect x="2.500" y="2.500" width="31" height="21" fill="url(#chk)" stroke="#2a2a2a"/><circle cx="18" cy="13" r="8" fill="#f7c870" stroke="#8a6020" stroke-width=".8"/><circle cx="18" cy="13" r="6" fill="#ffdb85"/><path d="M.5 6V.5H7M29 .5h6.500V6M35.500 20v5.500H29M7 25.500H.5V20" stroke="#fff" stroke-width="1.200" fill="none"/></svg>
<div class="t" style="left:1113px;top:679px;font-size:11px;color:#f4f4f4">Layer 6 copy</div>
<svg style="left:1073px;top:702px" width="32" height="19"><defs><linearGradient id="l8" x1="0" y1="0" x2="0" y2="1"><stop offset="0" stop-color="#fff"/><stop offset="1" stop-color="#777"/></linearGradient></defs><rect width="32" height="19" fill="url(#l8)"/><rect x="0" y="0" width="32" height="1.500" fill="#888" opacity=".6"/><rect x="0" y="4" width="32" height="1.500" fill="#888" opacity=".6"/><rect x="0" y="8" width="32" height="1.500" fill="#888" opacity=".6"/><rect x="0" y="12" width="32" height="1.500" fill="#888" opacity=".6"/><rect x="0" y="16" width="32" height="1.500" fill="#888" opacity=".6"/></svg>
<svg style="left:1107px;top:704px" width="9" height="15"><rect x="1" y="1" width="6" height="6" rx="3" stroke="#ddd" stroke-width="1.300" fill="none"/><rect x="1" y="8" width="6" height="6" rx="3" stroke="#ddd" stroke-width="1.300" fill="none"/><path d="M4 5v5" stroke="#ddd" stroke-width="1.300"/></svg>
<svg style="left:1120px;top:702px" width="32" height="19"><rect width="32" height="19" fill="#000"/><path d="M12 3a10 10 0 0 0-3 14" stroke="#eee" stroke-width="1" stroke-dasharray="2 1" fill="none"/></svg>
<div class="t" style="left:1160px;top:708px;font-size:11px;color:#eaeaea">Layer 8</div>
<div class="a" style="left:1039px;top:721px;width:240px;height:26px;background:#535353;border-top:1px solid #454545"></div>
<svg style="left:1074px;top:729px" width="15" height="9"><rect x=".7" y="1" width="6" height="6" rx="3" stroke="#8c8c8c" stroke-width="1.300" fill="none"/><rect x="8" y="1" width="6" height="6" rx="3" stroke="#8c8c8c" stroke-width="1.300" fill="none"/><path d="M4 4h7" stroke="#8c8c8c" stroke-width="1.300"/></svg>
<div class="t" style="left:1103px;top:726px;font-size:14px;font-style:italic;color:#d8d8d8;font-family:Liberation Serif">fx</div>
<svg style="left:1117px;top:741px" width="4" height="3"><path d="M0 0h4L2 3z" fill="#ddd"/></svg>
<svg style="left:1128px;top:728px" width="14" height="11"><rect width="14" height="11" fill="#ddd"/><circle cx="7" cy="5.500" r="3" fill="#535353"/></svg>
<svg style="left:1157px;top:727px" width="12" height="12"><circle cx="6" cy="6" r="5.300" stroke="#ddd" stroke-width="1.200" fill="none"/><path d="M10 2L2 10a5.300 5.300 0 0 0 8-8z" fill="#ddd"/></svg>
<svg style="left:1169px;top:741px" width="4" height="3"><path d="M0 0h4L2 3z" fill="#ddd"/></svg>
<svg style="left:1183px;top:727px" width="13" height="11"><path d="M0 1h5l1 1.500h7V11H0z" fill="#ddd"/></svg>
<svg style="left:1211px;top:727px" width="11" height="12"><path d="M.5 .5h10v7l-4 4h-6z" stroke="#ddd" stroke-width="1.200" fill="none"/></svg>
<svg style="left:1238px;top:726px" width="12" height="14"><path d="M0 2.500h12M4 .5h4M1.500 3.500l1 10h7l1-10M4.500 5v7M7.500 5v7" stroke="#ddd" stroke-width="1.200" fill="none"/></svg>
<div class="a" style="left:1038px;top:746px;width:242px;height:1px;background:#3a3a3a"></div>
<div class="a" style="left:32px;top:750px;width:1215px;height:60px;background:#262626;border-radius:6px;border-top:1px solid #3a3a3a"></div>
<div class="a" style="left:119px;top:748px;width:89px;height:2px;background:repeating-linear-gradient(90deg,#777 0 3px,#333 3px 5px)"></div>
<div class="t" style="left:0px;top:786px;font-size:9px;color:#555">or</div>
<svg style="left:39px;top:758px" width="33" height="31" viewBox="0 0 33 31"><defs><linearGradient id="fd1" x1="0" y1="0" x2="0" y2="1"><stop offset="0" stop-color="#3fd0fb"/><stop offset="1" stop-color="#1877e6"/></linearGradient></defs><rect width="33" height="31" rx="2" fill="#f0f0f0"/><path d="M2 0h15c-3 6-4 12-3 20h2v11H2a2 2 0 0 1-2-2V2a2 2 0 0 1 2-2z" fill="url(#fd1)"/><rect x="9" y="8" width="2" height="5" fill="#222"/><rect x="22" y="8" width="2" height="5" fill="#222"/><path d="M7 21c5 4 14 4 19 0" stroke="#222" stroke-width="1.500" fill="none"/></svg>
<svg style="left:79px;top:757px" width="34" height="34" viewBox="0 0 34 34"><defs><radialGradient id="lp" cx=".4" cy=".3" r=".8"><stop offset="0" stop-color="#c8c8c8"/><stop offset="1" stop-color="#6a6a6a"/></radialGradient></defs><circle cx="17" cy="17" r="16.500" fill="url(#lp)" stroke="#9a9a9a"/><path d="M25 8c-5 0-10 4-13 9l-4 1-1 3 3-.5 2 2-.5 3 3-1 1-4c5-3 9-8 9-13z" fill="#333"/></svg>
<svg style="left:120px;top:757px" width="35" height="35" viewBox="0 0 35 35"><circle cx="17.500" cy="17.500" r="17" fill="#eee"/><circle cx="17.500" cy="17.500" r="15" fill="#1e8ef0"/><circle cx="17.500" cy="17.500" r="12.500" fill="#3aa8f8"/><path d="M27 8L15.500 15.500l4 4z" fill="#ff3b30"/><path d="M8 27l7.500-11.500 4 4z" fill="#fff"/></svg>
<svg style="left:163px;top:758px" width="31" height="34" viewBox="0 0 31 34"><rect x="1" y="1" width="27" height="32" rx="2" fill="#b4875a" stroke="#8a6640"/><rect x="28" y="5" width="2.500" height="6" fill="#a0d0a0"/><rect x="28" y="12" width="2.500" height="6" fill="#6ab0e0"/><rect x="28" y="19" width="2.500" height="6" fill="#e0c060"/><circle cx="14" cy="17" r="7" fill="none" stroke="#9a7048" stroke-width="1.200"/><circle cx="14" cy="15" r="2.500" fill="#9a7048"/><path d="M9.500 21.500a5 5 0 0 1 9 0" fill="#9a7048"/></svg>
<svg style="left:203px;top:758px" width="32" height="32" viewBox="0 0 32 32"><rect x="1" y="1" width="30" height="30" rx="1" fill="#f8f8f8" stroke="#555"/><rect x="1" y="1" width="30" height="8" fill="#ee4444"/><text x="16" y="8" text-anchor="middle" font-size="6" fill="#fff" font-family="Liberation Sans">DEC</text><text x="16" y="26" text-anchor="middle" font-size="16" fill="#222" font-family="Liberation Sans">20</text></svg>
<svg style="left:245px;top:758px" width="31" height="33" viewBox="0 0 31 33"><path d="M2 3l26-2 2 30-26 2z" fill="#fafae8" stroke="#ccc" stroke-width=".5"/><path d="M2 3l26-2 .5 6-26 2z" fill="#f5d040"/><path d="M4 12.0l24-1.800" stroke="#d8d8c8" stroke-width=".7"/><path d="M4 15.5l24-1.800" stroke="#d8d8c8" stroke-width=".7"/><path d="M4 19.0l24-1.800" stroke="#d8d8c8" stroke-width=".7"/><path d="M4 22.5l24-1.800" stroke="#d8d8c8" stroke-width=".7"/><path d="M4 26.0l24-1.800" stroke="#d8d8c8" stroke-width=".7"/><path d="M4 29.5l24-1.800" stroke="#d8d8c8" stroke-width=".7"/></svg>
<svg style="left:287px;top:757px" width="32" height="34" viewBox="0 0 32 34"><path d="M3 2l26 2-2 29-26-2z" fill="#f8f8f8" stroke="#bbb" stroke-dasharray="2 1"/><path d="M6 6l20 1.500-1.500 22-20-1.500z" fill="#6aaee8"/><path d="M10 14c4-2 8 0 10 4l3 5-5-2-3 4-2-6z" fill="#8a6a40"/><circle cx="12" cy="13" r="2" fill="#eee"/></svg>
<svg style="left:329px;top:758px" width="30" height="33" viewBox="0 0 30 33"><path d="M2 3l24-2 2.500 29-24 2z" fill="#fafafa" stroke="#ccc" stroke-width=".6"/><circle cx="7" cy="9" r="2" fill="#f08030"/><circle cx="7.500" cy="15" r="2" fill="#30a0f0"/><circle cx="8" cy="21" r="2" fill="#50c050"/><circle cx="8.500" cy="27" r="2" fill="#c060d0"/><path d="M11 9l14-1.200" stroke="#ddd" stroke-width=".7"/><path d="M11 15l14-1.200" stroke="#ddd" stroke-width=".7"/><path d="M11 21l14-1.200" stroke="#ddd" stroke-width=".7"/><path d="M11 27l14-1.200" stroke="#ddd" stroke-width=".7"/></svg>
<svg style="left:366px;top:757px" width="36" height="35" viewBox="0 0 36 35"><path d="M2 4l24-2 2 24-24 2z" fill="#e8e0c0" stroke="#ccc" stroke-width=".6"/><path d="M3 6l22-2 .5 5-22 2z" fill="#60b060"/><path d="M5 14l10-1 1 10-9 1z" fill="#6aa8e0"/><path d="M12 12l12-1 1 8-10 1z" fill="#f0d040"/><circle cx="26" cy="25" r="9" fill="#f4f4f4" stroke="#aaa"/><circle cx="26" cy="25" r="6.500" fill="none" stroke="#888"/><text x="26" y="27.500" text-anchor="middle" font-size="6" fill="#555" font-family="Liberation Sans">3D</text><circle cx="26" cy="16.500" r="1" fill="#e04040"/></svg>
<svg style="left:409px;top:757px" width="34" height="34" viewBox="0 0 34 34"><defs><linearGradient id="msg" x1="0" y1="0" x2="0" y2="1"><stop offset="0" stop-color="#5ac8fa"/><stop offset="1" stop-color="#1a7ae8"/></linearGradient></defs><ellipse cx="15" cy="14" rx="15" ry="12.500" fill="url(#msg)"/><path d="M5 22l-2 7 8-4z" fill="#1a7ae8"/><ellipse cx="22" cy="24" rx="11" ry="8.500" fill="#f4f4f4" stroke="#aac" stroke-width=".5"/><path d="M28 30l4 3-1-6z" fill="#f4f4f4"/><circle cx="17" cy="24" r="1.600" fill="#1a6ad8"/><circle cx="22" cy="24" r="1.600" fill="#1a6ad8"/><circle cx="27" cy="24" r="1.600" fill="#1a6ad8"/></svg>
<svg style="left:449px;top:758px" width="35" height="33" viewBox="0 0 35 33"><rect x="1" y="1" width="30" height="28" rx="5" fill="#2ecc40"/><rect x="7" y="9" width="13" height="11" rx="2" fill="#e8ffe8"/><path d="M20 13l6-4v12l-6-4z" fill="#e8ffe8"/><circle cx="26" cy="24" r="8.500" fill="#f0f0f0" stroke="#aaa" stroke-width=".6"/><path d="M22.500 21c0 3 3 6 6 6l1.200-1.500-2-1.500-1 .8c-1-.5-2-1.500-2.500-2.500l.8-1-1.500-2z" fill="#2eb840"/></svg>
<svg style="left:493px;top:756px" width="30" height="36" viewBox="0 0 30 36"><path d="M1 10h28l-1.500 25H2.500z" fill="#c89a60"/><path d="M1 10h28v3H1z" fill="#b08040"/><path d="M5 3l8 7M20 1l-4 9M12 5l14 6" stroke="#333" stroke-width="2"/><path d="M8 2l6 8" stroke="#d03030" stroke-width="1.500"/><circle cx="15" cy="23" r="5.500" fill="none" stroke="#a07840" stroke-width="2"/></svg>
<svg style="left:531px;top:757px" width="35" height="34" viewBox="0 0 35 34"><rect x="1" y="1" width="33" height="32" fill="#0a1a28" stroke="#31a8ff" stroke-width="1.800"/><text x="17.500" y="24" text-anchor="middle" font-size="18" fill="#31c5ff" font-family="Liberation Sans">Ps</text></svg>
<svg style="left:572px;top:757px" width="35" height="34" viewBox="0 0 35 34"><rect x="1" y="1" width="33" height="32" fill="#2a1000" stroke="#ff7c00" stroke-width="1.800"/><text x="17.500" y="24" text-anchor="middle" font-size="18" fill="#ff8a10" font-family="Liberation Sans">Ai</text></svg>
<svg style="left:614px;top:758px" width="34" height="33" viewBox="0 0 34 33"><defs><linearGradient id="sp" x1="0" y1="0" x2="0" y2="1"><stop offset="0" stop-color="#b8b8b8"/><stop offset="1" stop-color="#808080"/></linearGradient></defs><rect x="1" y="1" width="32" height="31" rx="3" fill="url(#sp)"/><circle cx="17" cy="16.500" r="12.500" fill="#3a3a3a"/><circle cx="17" cy="16.500" r="10.500" fill="none" stroke="#9a9a9a" stroke-width="2.500" stroke-dasharray="2 1.500"/><circle cx="17" cy="16.500" r="8" fill="#2a2a2a"/><path d="M17 16.500V9M17 16.500l6.500 4M17 16.500l-6.500 4" stroke="#aaa" stroke-width="2.200"/></svg>
<svg style="left:654px;top:757px" width="36" height="35" viewBox="0 0 36 35"><rect x="2" y="2" width="22" height="27" fill="#9ac8a8" stroke="#666" stroke-width=".5"/><rect x="6" y="5" width="22" height="27" fill="#8ab0e0" stroke="#666" stroke-width=".5"/><rect x="10" y="7" width="24" height="27" fill="#a070e0" stroke="#666" stroke-width=".5"/><rect x="2" y="3" width="1.500" height="25" fill="#555" opacity=".6"/><rect x="6" y="6" width="1.500" height="25" fill="#555" opacity=".6"/><rect x="10" y="8" width="1.500" height="25" fill="#555" opacity=".6"/></svg>
<svg style="left:695px;top:757px" width="35" height="35" viewBox="0 0 35 35"><circle cx="17.500" cy="17.500" r="17" fill="#e8e8e8"/><circle cx="17.500" cy="17.500" r="15.500" fill="#d84030"/><rect x="9" y="10" width="16" height="11" stroke="#fff" stroke-width="1.800" fill="none"/><path d="M15 21v4M20 21v4M12 25h10" stroke="#fff" stroke-width="1.500"/><circle cx="24" cy="23" r="4" fill="#d84030" stroke="#fff" stroke-width="1"/></svg>
<svg style="left:741px;top:757px" width="25" height="35" viewBox="0 0 25 35"><path d="M12 2c2 4-1 6 0 9M12 33c2-4-1-6 0-9M2 8c4 2 6 5 8 8M22 8c-4 2-6 5-8 8M2 27c4-2 6-5 8-8M22 27c-4-2-6-5-8-8M1 17h8" stroke="#b0b0b0" stroke-width="2.200" fill="none"/><circle cx="16" cy="17.500" r="3.500" fill="none" stroke="#c0c0c0" stroke-width="1.800"/></svg>
<svg style="left:777px;top:757px" width="37" height="35" viewBox="0 0 37 35"><path d="M3 29C0 20 2 8 10 3c3 4 5 9 8 12 3-3 5-8 8-12 8 5 10 17 7 26-3 0-5-2-6-4l-3-9-6 8-6-8-3 9c-1 2-3 4-6 4z" fill="#1a6ad0"/></svg>
<svg style="left:819px;top:756px" width="35" height="35" viewBox="0 0 35 35"><rect x="1" y="1" width="33" height="33" rx="3" fill="#3c3c3c" stroke="#4a4a4a"/><path d="M8 13l19 6v6L8 19z" fill="#d07800"/><path d="M8 13.500L27 7.500v6L8 19.500z" fill="#ff9f0a"/><path d="M8 21.500l19-6v6L8 27.500z" fill="#ff9f0a"/></svg>
<svg style="left:860px;top:757px" width="35" height="35" viewBox="0 0 35 35"><circle cx="17.500" cy="17.500" r="17" fill="#f4f4f4"/><defs><linearGradient id="it" x1="0" y1="0" x2="0" y2="1"><stop offset="0" stop-color="#ff5070"/><stop offset="1" stop-color="#e01030"/></linearGradient></defs><circle cx="17.500" cy="17.500" r="15.500" fill="url(#it)"/><path d="M14 24V11l10-2.500V21" stroke="#fff" stroke-width="2" fill="none"/><ellipse cx="12" cy="24" rx="3" ry="2.400" fill="#fff"/><ellipse cx="22" cy="21.500" rx="3" ry="2.400" fill="#fff"/></svg>
<svg style="left:900px;top:755px" width="37" height="38" viewBox="0 0 37 38"><rect x="1" y="1" width="24" height="23" rx="2.500" fill="#1e88e5"/><rect x="12" y="13" width="24" height="24" rx="2.500" fill="#e53935"/><path d="M12 13h13v11H12z" fill="#333"/><path d="M8 8l20 20M8 8h8M8 8v8M28 28h-8M28 28v-8" stroke="#222" stroke-width="3" fill="none"/></svg>
<svg style="left:942px;top:757px" width="35" height="35" viewBox="0 0 35 35"><circle cx="17.500" cy="17.500" r="17" fill="#f4f4f4"/><defs><linearGradient id="ib" x1="0" y1="0" x2="0" y2="1"><stop offset="0" stop-color="#ffa030"/><stop offset="1" stop-color="#f06010"/></linearGradient></defs><circle cx="17.500" cy="17.500" r="15.500" fill="url(#ib)"/><path d="M6 11c4-1 8-1 11 1v13c-3-2-7-2-11-1zM29 11c-4-1-8-1-11 1v13c3-2 7-2 11-1z" fill="#fff"/></svg>
<svg style="left:983px;top:757px" width="35" height="35" viewBox="0 0 35 35"><circle cx="17.500" cy="17.500" r="17" fill="#f0f0f0"/><defs><linearGradient id="as" x1="0" y1="0" x2="0" y2="1"><stop offset="0" stop-color="#38b8fa"/><stop offset="1" stop-color="#1668e0"/></linearGradient></defs><circle cx="17.500" cy="17.500" r="15.500" fill="url(#as)"/><path d="M11 27l8-16M24 27l-8-16M8 21h19" stroke="#fff" stroke-width="2.200" fill="none"/><circle cx="29" cy="5" r="5.500" fill="#ee3030"/><text x="29" y="8" text-anchor="middle" font-size="8" fill="#fff" font-family="Liberation Sans">1</text></svg>
<svg style="left:1023px;top:757px" width="37" height="37" viewBox="0 0 37 37"><circle cx="18.500" cy="18.500" r="18" fill="#4caf50"/><path d="M18.500 .5A18 18 0 0 1 34.100 9.500H18.500a9 9 0 0 0-7.800 4.500L2.900 9.500A18 18 0 0 1 18.500 .5z" fill="#e53935"/><path d="M34.100 9.500A18 18 0 0 1 18.500 36.500l7.800-13.500a9 9 0 0 0 0-9z" fill="#fbc02d"/><path d="M2.900 9.500l7.800 13.500a9 9 0 0 0 7.800 4.500L18.500 36.500A18 18 0 0 1 2.900 9.500z" fill="#43a047" opacity="0"/><circle cx="18.500" cy="18.500" r="8" fill="#fff"/><circle cx="18.500" cy="18.500" r="6.300" fill="#4285f4"/></svg>
<svg style="left:1065px;top:758px" width="35" height="32" viewBox="0 0 35 32"><rect x="1" y="1" width="33" height="30" rx="2" fill="#1a1a1a" stroke="#9aa" stroke-width="1.200"/><text x="5" y="11" font-size="9" fill="#fff" font-family="Liberation Mono">&gt;_</text></svg>
<div class="a" style="left:1112px;top:756px;width:1px;height:38px;background:#5a5a5a"></div>
<svg style="left:1123px;top:761px" width="38" height="30" viewBox="0 0 38 30"><rect x="0" y="0" width="37" height="22" fill="#f7f7f7" stroke="#bbb" stroke-width=".5"/><rect x="0" y="0" width="9" height="22" fill="#ececec"/><rect x="2" y="3" width="5" height="1" fill="#bbb"/><rect x="2" y="6" width="5" height="1" fill="#bbb"/><rect x="2" y="9" width="5" height="1" fill="#bbb"/><rect x="2" y="12" width="5" height="1" fill="#bbb"/><rect x="2" y="15" width="5" height="1" fill="#bbb"/><rect x="2" y="18" width="5" height="1" fill="#bbb"/><rect x="13" y="4" width="3" height="3.500" fill="#333"/><rect x="13" y="10" width="3" height="3.500" fill="#c8c8c8"/><rect x="13" y="16" width="3" height="3.500" fill="#c8c8c8"/><rect x="19" y="4" width="3" height="3.500" fill="#c8c8c8"/><rect x="19" y="10" width="3" height="3.500" fill="#333"/><rect x="19" y="16" width="3" height="3.500" fill="#c8c8c8"/><rect x="25" y="4" width="3" height="3.500" fill="#c8c8c8"/><rect x="25" y="10" width="3" height="3.500" fill="#c8c8c8"/><rect x="25" y="16" width="3" height="3.500" fill="#333"/><rect x="31" y="4" width="3" height="3.500" fill="#333"/><rect x="31" y="10" width="3" height="3.500" fill="#c8c8c8"/><rect x="31" y="16" width="3" height="3.500" fill="#c8c8c8"/><rect x="26" y="17" width="11" height="13" rx="1" fill="#2a88e8"/><rect x="31" y="17" width="6" height="13" fill="#e8e8f0"/><path d="M31 19c-1 3-1 6 0 9" stroke="#123" stroke-width=".8" fill="none"/></svg>
<svg style="left:1165px;top:761px" width="38" height="30" viewBox="0 0 38 30"><rect x="0" y="0" width="37" height="22" fill="#f7f7f7" stroke="#bbb" stroke-width=".5"/><rect x="0" y="0" width="9" height="22" fill="#ececec"/><rect x="2" y="3" width="5" height="1" fill="#bbb"/><rect x="2" y="6" width="5" height="1" fill="#bbb"/><rect x="2" y="9" width="5" height="1" fill="#bbb"/><rect x="2" y="12" width="5" height="1" fill="#bbb"/><rect x="2" y="15" width="5" height="1" fill="#bbb"/><rect x="2" y="18" width="5" height="1" fill="#bbb"/><rect x="13" y="4" width="3" height="3.500" fill="#c8c8c8"/><rect x="13" y="10" width="3" height="3.500" fill="#c8c8c8"/><rect x="13" y="16" width="3" height="3.500" fill="#c8c8c8"/><rect x="19" y="4" width="3" height="3.500" fill="#c8c8c8"/><rect x="19" y="10" width="3" height="3.500" fill="#c8c8c8"/><rect x="19" y="16" width="3" height="3.500" fill="#c8c8c8"/><rect x="25" y="4" width="3" height="3.500" fill="#c8c8c8"/><rect x="25" y="10" width="3" height="3.500" fill="#c8c8c8"/><rect x="25" y="16" width="3" height="3.500" fill="#c8c8c8"/><rect x="31" y="4" width="3" height="3.500" fill="#c8c8c8"/><rect x="31" y="10" width="3" height="3.500" fill="#c8c8c8"/><rect x="31" y="16" width="3" height="3.500" fill="#c8c8c8"/><rect x="26" y="17" width="11" height="13" rx="1" fill="#2a88e8"/><rect x="31" y="17" width="6" height="13" fill="#e8e8f0"/><path d="M31 19c-1 3-1 6 0 9" stroke="#123" stroke-width=".8" fill="none"/></svg>
<svg style="left:1211px;top:757px" width="29" height="35" viewBox="0 0 29 35"><defs><linearGradient id="tr" x1="0" y1="0" x2="1" y2="0"><stop offset="0" stop-color="#cfcfcf"/><stop offset=".5" stop-color="#f4f4f4"/><stop offset="1" stop-color="#c4c4c4"/></linearGradient></defs><ellipse cx="14.500" cy="4" rx="13.500" ry="3.500" fill="#e0e0e0" stroke="#bbb" stroke-width=".6"/><path d="M1 4l3 29c1 2 20 2 21 0l3-29c-1 4-26 4-27 0z" fill="url(#tr)"/></svg>
<div class="a" style="left:53px;top:793px;width:4px;height:4px;border-radius:50%;background:#aaa"></div>
<div class="a" style="left:546px;top:793px;width:4px;height:4px;border-radius:50%;background:#aaa"></div>
<div class="a" style="left:1039px;top:793px;width:4px;height:4px;border-radius:50%;background:#aaa"></div>
<svg style="left:0;top:0" width="1280" height="800" viewBox="0 0 1280 800"><defs>
<clipPath id="cvclip"><rect x="69" y="128" width="900" height="600"/></clipPath>
<clipPath id="backclip"><ellipse cx="504" cy="428.7" rx="241" ry="261.7"/></clipPath>
<linearGradient id="rimA" x1=".2" y1="0" x2=".8" y2="1">
 <stop offset="0" stop-color="#fbe8c0"/><stop offset=".45" stop-color="#ecc47a"/><stop offset=".7" stop-color="#b08840"/><stop offset=".88" stop-color="#6a4c1c"/><stop offset="1" stop-color="#1a1208"/></linearGradient>
<radialGradient id="rimB" cx=".5" cy=".5" r=".5">
 <stop offset="0" stop-color="#c89848"/><stop offset=".9" stop-color="#c89848"/><stop offset=".935" stop-color="#e4b468"/><stop offset=".965" stop-color="#f6dca0"/><stop offset="1" stop-color="#f0c878"/></radialGradient>
<linearGradient id="grooveG" x1="0" y1="0" x2="0" y2="1">
 <stop offset="0" stop-color="#2a2008"/><stop offset=".45" stop-color="#3a2c10"/><stop offset=".65" stop-color="#5a4818" stop-opacity=".5"/><stop offset=".8" stop-color="#f0d8a0" stop-opacity="0"/></linearGradient>
<linearGradient id="ridgeShade" x1="0" y1="0" x2="0" y2="1">
 <stop offset="0" stop-color="#3a2008" stop-opacity="0"/><stop offset=".5" stop-color="#3a2008" stop-opacity="0"/><stop offset=".75" stop-color="#4a2808" stop-opacity=".4"/><stop offset="1" stop-color="#2a1404" stop-opacity=".7"/></linearGradient>
<linearGradient id="bandG" x1=".6" y1="0" x2=".4" y2="1">
 <stop offset="0" stop-color="#8a4a18"/><stop offset=".2" stop-color="#c87a30"/><stop offset=".35" stop-color="#e4a44c"/><stop offset=".55" stop-color="#f0c060"/><stop offset=".75" stop-color="#fad080"/><stop offset="1" stop-color="#fff0b8"/></linearGradient>
<radialGradient id="bandDark" cx=".78" cy=".12" r=".55">
 <stop offset="0" stop-color="#2e1606"/><stop offset=".5" stop-color="#3a1c08" stop-opacity=".9"/><stop offset=".8" stop-color="#4a2408" stop-opacity=".35"/><stop offset="1" stop-color="#4a2408" stop-opacity="0"/></radialGradient>
<linearGradient id="cupG" x1="0" y1="0" x2="0" y2="1">
 <stop offset="0" stop-color="#1e1804" stop-opacity=".75"/><stop offset=".3" stop-color="#4a3a18" stop-opacity=".45"/><stop offset=".55" stop-color="#c8b0a0" stop-opacity=".15"/><stop offset=".8" stop-color="#fcf4e0" stop-opacity=".45"/><stop offset="1" stop-color="#fcf4e0" stop-opacity=".25"/></linearGradient>
<radialGradient id="beadG" cx=".4" cy=".35" r=".7">
 <stop offset="0" stop-color="#fff8d8"/><stop offset=".5" stop-color="#e8c478"/><stop offset="1" stop-color="#8a6430"/></radialGradient>
<filter id="blur1" x="-5%" y="-5%" width="110%" height="110%"><feGaussianBlur stdDeviation="1.2"/></filter>
<filter id="blur2" x="-5%" y="-5%" width="110%" height="110%"><feGaussianBlur stdDeviation="1.8"/></filter>
<filter id="blur05" x="-5%" y="-5%" width="110%" height="110%"><feGaussianBlur stdDeviation=".7"/></filter>
<filter id="blur3" x="-50%" y="-50%" width="200%" height="200%"><feGaussianBlur stdDeviation="6"/></filter>
</defs><g clip-path="url(#cvclip)"><defs><linearGradient id="ridgeBase" x1="0" y1="0" x2="0" y2="1"><stop offset="0" stop-color="#f4dca8"/><stop offset=".5" stop-color="#e8c27c"/><stop offset=".8" stop-color="#c8903c"/><stop offset="1" stop-color="#b07828"/></linearGradient><linearGradient id="ridgeDark" x1="0" y1="0" x2="0" y2="1"><stop offset="0" stop-color="#c08840"/><stop offset=".45" stop-color="#b07030"/><stop offset=".75" stop-color="#5a3410"/><stop offset="1" stop-color="#2e1806"/></linearGradient></defs><ellipse cx="504" cy="428.7" rx="241" ry="261.7" fill="url(#ridgeBase)"/><path clip-path="url(#backclip)" d="M545.3 685.8H565.3V686.5H545.3zM538.7 687.0H558.7V687.7H538.7zM532.1 688.0H552.1V688.7H532.1zM525.4 688.8H545.4V689.5H525.4zM518.7 689.4H538.7V690.1H518.7zM512.0 689.8H532.0V690.5H512.0zM505.3 690.0H525.3V690.7H505.3zM498.7 690.0H518.7V690.7H498.7zM492.0 689.8H512.0V690.5H492.0zM485.3 689.4H505.3V690.1H485.3zM478.6 688.8H498.6V689.5H478.6zM471.9 688.0H491.9V688.7H471.9zM465.3 687.0H485.3V687.7H465.3zM458.7 685.8H478.7V686.5H458.7zM452.1 684.4H472.1V685.1H452.1zM445.6 682.7H465.6V683.5H445.6zM439.1 680.9H459.1V681.8H439.1zM432.6 678.8H452.6V679.8H432.6zM426.3 676.6H446.3V677.7H426.3zM419.9 674.2H439.9V675.3H419.9zM413.7 671.6H433.7V672.8H413.7zM407.5 668.8H427.5V670.1H407.5zM401.3 665.8H421.3V667.2H401.3zM395.3 662.6H415.3V664.1H395.3zM389.3 659.2H409.3V660.8H389.3zM383.4 655.7H403.4V657.4H383.4zM377.7 652.0H397.7V653.8H377.7zM372.0 648.1H392.0V650.0H372.0zM366.4 644.1H386.4V646.0H366.4zM360.9 639.9H380.9V641.8H360.9zM355.5 635.5H375.5V637.5H355.5zM350.2 630.9H370.2V633.1H350.2zM345.1 626.2H365.1V628.5H345.1zM340.1 621.4H360.1V623.7H340.1zM335.2 616.4H355.2V618.7H335.2zM330.4 611.2H350.4V613.7H330.4zM325.8 606.0H345.8V608.5H325.8zM321.3 600.5H341.3V603.1H321.3zM316.9 595.0H336.9V597.6H316.9zM312.7 589.3H332.7V592.0H312.7zM308.6 583.5H328.6V586.2H308.6zM304.7 577.6H324.7V580.4H304.7zM300.9 571.5H320.9V574.4H300.9zM297.3 565.4H317.3V568.3H297.3zM293.8 559.1H313.8V562.1H293.8zM290.6 552.8H310.6V555.8H290.6zM287.4 546.3H307.4V549.3H287.4zM284.5 539.8H304.5V542.8H284.5zM281.7 533.1H301.7V536.3H281.7zM279.0 526.4H299.0V529.6H279.0zM276.6 519.6H296.6V522.8H276.6zM274.3 512.8H294.3V516.0H274.3zM272.2 505.9H292.2V509.1H272.2zM270.3 498.9H290.3V502.2H270.3zM268.5 491.9H288.5V495.1H268.5zM266.9 484.8H286.9V488.1H266.9zM265.5 477.6H285.5V481.0H265.5zM264.3 470.5H284.3V473.8H264.3zM263.3 463.3H283.3V466.6H263.3zM262.5 456.1H282.5V459.4H262.5zM261.8 448.8H281.8V452.2H261.8zM261.4 441.5H281.4V444.9H261.4zM261.1 434.3H281.1V437.7H261.1zM261.0 427.0H281.0V430.4H261.0zM261.1 419.7H281.1V423.1H261.1zM261.4 412.5H281.4V415.9H261.4zM261.8 405.2H281.8V408.6H261.8zM262.5 398.0H282.5V401.3H262.5zM263.3 390.8H283.3V394.1H263.3zM264.3 383.6H284.3V386.9H264.3zM265.5 376.4H285.5V379.8H265.5zM266.9 369.3H286.9V372.6H266.9zM268.5 362.3H288.5V365.5H268.5zM270.3 355.2H290.3V358.5H270.3zM272.2 348.3H292.2V351.5H272.2zM274.3 341.4H294.3V344.6H274.3zM276.6 334.6H296.6V337.8H276.6zM279.0 327.8H299.0V331.0H279.0zM281.7 321.1H301.7V324.3H281.7zM284.5 314.6H304.5V317.6H284.5zM287.4 308.1H307.4V311.1H287.4zM290.6 301.6H310.6V304.6H290.6zM293.8 295.3H313.8V298.3H293.8zM297.3 289.1H317.3V292.0H297.3zM300.9 283.0H320.9V285.9H300.9zM304.7 277.0H324.7V279.8H304.7zM308.6 271.2H328.6V273.9H308.6zM312.7 265.4H332.7V268.1H312.7zM316.9 259.8H336.9V262.4H316.9zM321.3 254.3H341.3V256.9H321.3zM325.8 248.9H345.8V251.4H325.8zM330.4 243.7H350.4V246.2H330.4zM335.2 238.7H355.2V241.0H335.2zM340.1 233.7H360.1V236.0H340.1zM345.1 228.9H365.1V231.2H345.1zM350.2 224.3H370.2V226.5H350.2zM355.5 219.9H375.5V221.9H355.5zM360.9 215.6H380.9V217.5H360.9zM366.4 211.4H386.4V213.3H366.4zM372.0 207.4H392.0V209.3H372.0zM377.7 203.6H397.7V205.4H377.7zM383.4 200.0H403.4V201.7H383.4zM389.3 196.6H409.3V198.2H389.3zM395.3 193.3H415.3V194.8H395.3zM401.3 190.2H421.3V191.6H401.3zM407.5 187.3H427.5V188.6H407.5zM413.7 184.6H433.7V185.8H413.7zM419.9 182.1H439.9V183.2H419.9zM426.3 179.7H446.3V180.8H426.3zM432.6 177.6H452.6V178.6H432.6zM439.1 175.6H459.1V176.5H439.1zM445.6 173.9H465.6V174.7H445.6zM452.1 172.3H472.1V173.0H452.1zM458.7 170.9H478.7V171.6H458.7zM465.3 169.7H485.3V170.4H465.3zM471.9 168.7H491.9V169.4H471.9zM478.6 167.9H498.6V168.6H478.6zM485.3 167.3H505.3V168.0H485.3zM492.0 166.9H512.0V167.6H492.0zM498.7 166.7H518.7V167.4H498.7zM505.3 166.7H525.3V167.4H505.3zM512.0 166.9H532.0V167.6H512.0zM518.7 167.3H538.7V168.0H518.7zM525.4 167.9H545.4V168.6H525.4zM532.1 168.7H552.1V169.4H532.1zM538.7 169.7H558.7V170.4H538.7zM545.3 170.9H565.3V171.6H545.3z" fill="url(#ridgeDark)" filter="url(#blur05)"/><ellipse cx="520" cy="428.7" rx="241" ry="261.7" fill="url(#rimA)"/><ellipse cx="518.5" cy="426.2" rx="237.5" ry="256.7" fill="url(#rimB)"/><ellipse cx="517" cy="428" rx="226" ry="246" fill="url(#bandG)"/><ellipse cx="517" cy="428" rx="226" ry="246" fill="url(#bandDark)"/><ellipse cx="516.500" cy="427.500" rx="227.500" ry="247.500" fill="none" stroke="url(#grooveG)" stroke-width="6" filter="url(#blur2)"/><ellipse cx="368" cy="565" rx="40" ry="11" transform="rotate(42 368 565)" fill="#fffff4" filter="url(#blur3)"/><path d="M520 217.8C530.7 218.1 535.2 217.8 541 219.5C546.8 221.2 549.2 225.4 555 228C560.8 230.6 569.0 232.3 576 235C583.0 237.7 590.6 240.2 597 244C603.4 247.8 608.7 253.3 614.5 258C620.3 262.7 626.2 267.3 632 272C637.8 276.7 643.7 281.3 649.5 286C655.3 290.7 661.2 294.8 667 300C672.8 305.2 679.2 310.5 684.5 317.5C689.8 324.5 694.4 335.0 698.5 342C702.6 349.0 706.1 353.7 709 359.5C711.9 365.3 714.2 369.4 716 377C717.8 384.6 718.9 396.8 719.5 405C720.1 413.2 720.1 417.7 719.5 426C718.9 434.3 717.8 443.2 716 455C714.2 466.8 712.5 483.6 709 497C705.5 510.4 700.8 523.2 695 535.5C689.2 547.8 681.6 560.0 674 570.5C666.4 581.0 658.8 590.3 649.5 598.5C640.2 606.7 630.2 613.7 618 619.5C605.8 625.3 592.3 629.9 576 633.5C559.7 637.1 533.0 640.4 520 641C507.0 641.6 507.5 639.3 498 637C488.5 634.7 473.5 631.0 463 627C452.5 623.0 443.8 618.2 435 613C426.2 607.8 417.5 601.8 410.5 596C403.5 590.2 398.8 584.0 393 578C387.2 572.0 383.1 566.0 375.5 560C367.9 554.0 356.4 547.8 347.5 542C338.6 536.2 327.2 536.6 322 525C316.8 513.4 317.0 490.0 316 472.5C315.0 455.0 314.8 431.2 316 420C317.2 408.8 320.7 418.0 323 405C325.3 392.0 325.9 359.5 330 342C334.1 324.5 339.9 312.8 347.5 300C355.1 287.2 365.6 274.9 375.5 265C385.4 255.1 395.9 247.5 407 240.5C418.1 233.5 430.3 226.8 442 223C453.7 219.2 464.0 218.7 477 217.8C490.0 216.9 509.3 217.5 520 217.8z" fill="#ffdc86"/><g><path d="M733.9 437.1L734.0 428.3L716.5 428.0L716.4 436.8z" fill="url(#cupG)"/><path d="M733.2 447.5L733.8 438.8L716.3 437.7L715.8 446.5z" fill="url(#cupG)"/><path d="M732.2 457.9L733.1 449.2L715.7 447.4L714.8 456.1z" fill="url(#cupG)"/><path d="M730.7 468.2L732.0 459.5L714.7 457.0L713.4 465.7z" fill="url(#cupG)"/><path d="M728.8 478.5L730.5 469.8L713.3 466.6L711.6 475.2z" fill="url(#cupG)"/><path d="M726.5 488.6L728.5 480.0L711.5 476.1L709.5 484.7z" fill="url(#cupG)"/><path d="M723.8 498.6L726.1 490.2L709.3 485.5L706.9 494.0z" fill="url(#cupG)"/><path d="M720.6 508.5L723.3 500.1L706.7 494.8L704.0 503.1z" fill="url(#cupG)"/><path d="M717.1 518.2L720.1 510.0L703.7 503.9L700.7 512.2z" fill="url(#cupG)"/><path d="M713.1 527.8L716.5 519.6L700.4 512.9L697.0 521.0z" fill="url(#cupG)"/><path d="M708.8 537.1L712.5 529.1L696.7 521.7L692.9 529.7z" fill="url(#cupG)"/><path d="M704.0 546.2L708.1 538.4L692.6 530.3L688.5 538.1z" fill="url(#cupG)"/><path d="M698.9 555.1L703.4 547.5L688.2 538.7L683.8 546.3z" fill="url(#cupG)"/><path d="M693.5 563.7L698.2 556.3L683.5 546.9L678.7 554.3z" fill="url(#cupG)"/><path d="M687.7 572.1L692.7 564.9L678.4 554.8L673.3 562.0z" fill="url(#cupG)"/><path d="M681.5 580.1L686.9 573.2L673.0 562.5L667.6 569.5z" fill="url(#cupG)"/><path d="M675.0 587.9L680.7 581.2L667.3 569.9L661.6 576.6z" fill="url(#cupG)"/><path d="M668.2 595.3L674.2 588.9L661.3 577.0L655.3 583.5z" fill="url(#cupG)"/><path d="M661.1 602.4L667.3 596.2L655.0 583.8L648.8 590.0z" fill="url(#cupG)"/><path d="M653.7 609.2L660.2 603.3L648.5 590.3L641.9 596.2z" fill="url(#cupG)"/><path d="M646.0 615.5L652.8 609.9L641.7 596.5L634.9 602.1z" fill="url(#cupG)"/><path d="M638.1 621.5L645.1 616.3L634.6 602.3L627.6 607.6z" fill="url(#cupG)"/><path d="M629.9 627.2L637.2 622.2L627.3 607.7L620.1 612.7z" fill="url(#cupG)"/><path d="M621.5 632.4L629.0 627.7L619.8 612.8L612.3 617.5z" fill="url(#cupG)"/><path d="M612.9 637.1L620.6 632.9L612.2 617.6L604.5 621.8z" fill="url(#cupG)"/><path d="M604.1 641.5L612.0 637.6L604.3 621.9L596.4 625.8z" fill="url(#cupG)"/><path d="M595.2 645.4L603.2 641.9L596.2 625.9L588.2 629.4z" fill="url(#cupG)"/><path d="M586.0 648.9L594.3 645.8L588.0 629.5L579.8 632.6z" fill="url(#cupG)"/><path d="M576.8 652.0L585.1 649.3L579.7 632.6L571.3 635.3z" fill="url(#cupG)"/><path d="M567.4 654.6L575.9 652.2L571.3 635.4L562.8 637.7z" fill="url(#cupG)"/><path d="M557.9 656.7L566.5 654.8L562.7 637.7L554.1 639.6z" fill="url(#cupG)"/><path d="M548.4 658.4L557.0 656.9L554.1 639.6L545.4 641.1z" fill="url(#cupG)"/><path d="M538.8 659.6L547.5 658.5L545.4 641.1L536.6 642.2z" fill="url(#cupG)"/><path d="M529.1 660.3L537.9 659.6L536.6 642.2L527.8 642.8z" fill="url(#cupG)"/><path d="M519.4 660.5L528.2 660.3L527.8 642.8L519.0 643.1z" fill="url(#cupG)"/><path d="M509.8 660.3L518.6 660.5L519.0 643.1L510.2 642.8z" fill="url(#cupG)"/><path d="M500.1 659.6L508.9 660.3L510.2 642.8L501.4 642.2z" fill="url(#cupG)"/><path d="M490.5 658.5L499.2 659.6L501.4 642.2L492.6 641.1z" fill="url(#cupG)"/><path d="M481.0 656.9L489.6 658.4L492.6 641.1L483.9 639.6z" fill="url(#cupG)"/><path d="M471.5 654.8L480.1 656.7L483.9 639.6L475.3 637.7z" fill="url(#cupG)"/><path d="M462.1 652.2L470.6 654.6L475.2 637.7L466.7 635.4z" fill="url(#cupG)"/><path d="M452.9 649.3L461.2 652.0L466.7 635.3L458.3 632.6z" fill="url(#cupG)"/><path d="M443.7 645.8L452.0 648.9L458.2 632.6L450.0 629.5z" fill="url(#cupG)"/><path d="M434.8 641.9L442.8 645.4L449.8 629.4L441.8 625.9z" fill="url(#cupG)"/><path d="M426.0 637.6L433.9 641.5L441.6 625.8L433.7 621.9z" fill="url(#cupG)"/><path d="M417.4 632.9L425.1 637.1L433.5 621.8L425.8 617.6z" fill="url(#cupG)"/><path d="M409.0 627.7L416.5 632.4L425.7 617.5L418.2 612.8z" fill="url(#cupG)"/><path d="M400.8 622.2L408.1 627.2L417.9 612.7L410.7 607.7z" fill="url(#cupG)"/><path d="M392.9 616.3L399.9 621.5L410.4 607.6L403.4 602.3z" fill="url(#cupG)"/><path d="M385.2 609.9L392.0 615.5L403.1 602.1L396.3 596.5z" fill="url(#cupG)"/><path d="M377.8 603.3L384.3 609.2L396.1 596.2L389.5 590.3z" fill="url(#cupG)"/><path d="M370.7 596.2L376.9 602.4L389.2 590.0L383.0 583.8z" fill="url(#cupG)"/><path d="M363.8 588.9L369.8 595.3L382.7 583.5L376.7 577.0z" fill="url(#cupG)"/><path d="M357.3 581.2L363.0 587.9L376.4 576.6L370.7 569.9z" fill="url(#cupG)"/><path d="M351.1 573.2L356.5 580.1L370.4 569.5L365.0 562.5z" fill="url(#cupG)"/><path d="M345.3 564.9L350.3 572.1L364.7 562.0L359.6 554.8z" fill="url(#cupG)"/><path d="M339.8 556.3L344.5 563.7L359.3 554.3L354.5 546.9z" fill="url(#cupG)"/><path d="M334.6 547.5L339.1 555.1L354.2 546.3L349.8 538.7z" fill="url(#cupG)"/><path d="M329.9 538.4L334.0 546.2L349.5 538.1L345.4 530.3z" fill="url(#cupG)"/><path d="M325.5 529.1L329.2 537.1L345.1 529.7L341.3 521.7z" fill="url(#cupG)"/><path d="M321.5 519.6L324.9 527.8L341.0 521.0L337.6 512.9z" fill="url(#cupG)"/><path d="M317.9 510.0L320.9 518.2L337.3 512.2L334.3 503.9z" fill="url(#cupG)"/><path d="M314.7 500.1L317.4 508.5L334.0 503.1L331.3 494.8z" fill="url(#cupG)"/><path d="M311.9 490.2L314.2 498.6L331.1 494.0L328.7 485.5z" fill="url(#cupG)"/><path d="M309.5 480.0L311.5 488.6L328.5 484.7L326.5 476.1z" fill="url(#cupG)"/><path d="M307.5 469.8L309.2 478.5L326.4 475.2L324.7 466.6z" fill="url(#cupG)"/><path d="M306.0 459.5L307.3 468.2L324.6 465.7L323.3 457.0z" fill="url(#cupG)"/><path d="M304.9 449.2L305.8 457.9L323.2 456.1L322.3 447.4z" fill="url(#cupG)"/><path d="M304.2 438.8L304.8 447.5L322.2 446.5L321.7 437.7z" fill="url(#cupG)"/><path d="M304.0 428.3L304.1 437.1L321.6 436.8L321.5 428.0z" fill="url(#cupG)"/><path d="M304.1 417.9L304.0 426.7L321.5 427.0L321.6 418.2z" fill="url(#cupG)"/><path d="M304.8 407.5L304.2 416.2L321.7 417.3L322.2 408.5z" fill="url(#cupG)"/><path d="M305.8 397.1L304.9 405.8L322.3 407.6L323.2 398.9z" fill="url(#cupG)"/><path d="M307.3 386.8L306.0 395.5L323.3 398.0L324.6 389.3z" fill="url(#cupG)"/><path d="M309.2 376.5L307.5 385.2L324.7 388.4L326.4 379.8z" fill="url(#cupG)"/><path d="M311.5 366.4L309.5 375.0L326.5 378.9L328.5 370.3z" fill="url(#cupG)"/><path d="M314.2 356.4L311.9 364.8L328.7 369.5L331.1 361.0z" fill="url(#cupG)"/><path d="M317.4 346.5L314.7 354.9L331.3 360.2L334.0 351.9z" fill="url(#cupG)"/><path d="M320.9 336.8L317.9 345.0L334.3 351.1L337.3 342.8z" fill="url(#cupG)"/><path d="M324.9 327.2L321.5 335.4L337.6 342.1L341.0 334.0z" fill="url(#cupG)"/><path d="M329.2 317.9L325.5 325.9L341.3 333.3L345.1 325.3z" fill="url(#cupG)"/><path d="M334.0 308.8L329.9 316.6L345.4 324.7L349.5 316.9z" fill="url(#cupG)"/><path d="M339.1 299.9L334.6 307.5L349.8 316.3L354.2 308.7z" fill="url(#cupG)"/><path d="M344.5 291.3L339.8 298.7L354.5 308.1L359.3 300.7z" fill="url(#cupG)"/><path d="M350.3 282.9L345.3 290.1L359.6 300.2L364.7 293.0z" fill="url(#cupG)"/><path d="M356.5 274.9L351.1 281.8L365.0 292.5L370.4 285.5z" fill="url(#cupG)"/><path d="M363.0 267.1L357.3 273.8L370.7 285.1L376.4 278.4z" fill="url(#cupG)"/><path d="M369.8 259.7L363.8 266.1L376.7 278.0L382.7 271.5z" fill="url(#cupG)"/><path d="M376.9 252.6L370.7 258.8L383.0 271.2L389.2 265.0z" fill="url(#cupG)"/><path d="M384.3 245.8L377.8 251.7L389.5 264.7L396.1 258.8z" fill="url(#cupG)"/><path d="M392.0 239.5L385.2 245.1L396.3 258.5L403.1 252.9z" fill="url(#cupG)"/><path d="M399.9 233.5L392.9 238.7L403.4 252.7L410.4 247.4z" fill="url(#cupG)"/><path d="M408.1 227.8L400.8 232.8L410.7 247.3L417.9 242.3z" fill="url(#cupG)"/><path d="M416.5 222.6L409.0 227.3L418.2 242.2L425.7 237.5z" fill="url(#cupG)"/><path d="M425.1 217.9L417.4 222.1L425.8 237.4L433.5 233.2z" fill="url(#cupG)"/><path d="M433.9 213.5L426.0 217.4L433.7 233.1L441.6 229.2z" fill="url(#cupG)"/><path d="M442.8 209.6L434.8 213.1L441.8 229.1L449.8 225.6z" fill="url(#cupG)"/><path d="M452.0 206.1L443.7 209.2L450.0 225.5L458.2 222.4z" fill="url(#cupG)"/><path d="M461.2 203.0L452.9 205.7L458.3 222.4L466.7 219.7z" fill="url(#cupG)"/><path d="M470.6 200.4L462.1 202.8L466.7 219.6L475.2 217.3z" fill="url(#cupG)"/><path d="M480.1 198.3L471.5 200.2L475.3 217.3L483.9 215.4z" fill="url(#cupG)"/><path d="M489.6 196.6L481.0 198.1L483.9 215.4L492.6 213.9z" fill="url(#cupG)"/><path d="M499.2 195.4L490.5 196.5L492.6 213.9L501.4 212.8z" fill="url(#cupG)"/><path d="M508.9 194.7L500.1 195.4L501.4 212.8L510.2 212.2z" fill="url(#cupG)"/><path d="M518.6 194.5L509.8 194.7L510.2 212.2L519.0 211.9z" fill="url(#cupG)"/><path d="M528.2 194.7L519.4 194.5L519.0 211.9L527.8 212.2z" fill="url(#cupG)"/><path d="M537.9 195.4L529.1 194.7L527.8 212.2L536.6 212.8z" fill="url(#cupG)"/><path d="M547.5 196.5L538.8 195.4L536.6 212.8L545.4 213.9z" fill="url(#cupG)"/><path d="M557.0 198.1L548.4 196.6L545.4 213.9L554.1 215.4z" fill="url(#cupG)"/><path d="M566.5 200.2L557.9 198.3L554.1 215.4L562.7 217.3z" fill="url(#cupG)"/><path d="M575.9 202.8L567.4 200.4L562.8 217.3L571.3 219.6z" fill="url(#cupG)"/><path d="M585.1 205.7L576.8 203.0L571.3 219.7L579.7 222.4z" fill="url(#cupG)"/><path d="M594.3 209.2L586.0 206.1L579.8 222.4L588.0 225.5z" fill="url(#cupG)"/><path d="M603.2 213.1L595.2 209.6L588.2 225.6L596.2 229.1z" fill="url(#cupG)"/><path d="M612.0 217.4L604.1 213.5L596.4 229.2L604.3 233.1z" fill="url(#cupG)"/><path d="M620.6 222.1L612.9 217.9L604.5 233.2L612.2 237.4z" fill="url(#cupG)"/><path d="M629.0 227.3L621.5 222.6L612.3 237.5L619.8 242.2z" fill="url(#cupG)"/><path d="M637.2 232.8L629.9 227.8L620.1 242.3L627.3 247.3z" fill="url(#cupG)"/><path d="M645.1 238.7L638.1 233.5L627.6 247.4L634.6 252.7z" fill="url(#cupG)"/><path d="M652.8 245.1L646.0 239.5L634.9 252.9L641.7 258.5z" fill="url(#cupG)"/><path d="M660.2 251.7L653.7 245.8L641.9 258.8L648.5 264.7z" fill="url(#cupG)"/><path d="M667.3 258.8L661.1 252.6L648.8 265.0L655.0 271.2z" fill="url(#cupG)"/><path d="M674.2 266.1L668.2 259.7L655.3 271.5L661.3 278.0z" fill="url(#cupG)"/><path d="M680.7 273.8L675.0 267.1L661.6 278.4L667.3 285.1z" fill="url(#cupG)"/><path d="M686.9 281.8L681.5 274.9L667.6 285.5L673.0 292.5z" fill="url(#cupG)"/><path d="M692.7 290.1L687.7 282.9L673.3 293.0L678.4 300.2z" fill="url(#cupG)"/><path d="M698.2 298.7L693.5 291.3L678.7 300.7L683.5 308.1z" fill="url(#cupG)"/><path d="M703.4 307.5L698.9 299.9L683.8 308.7L688.2 316.3z" fill="url(#cupG)"/><path d="M708.1 316.6L704.0 308.8L688.5 316.9L692.6 324.7z" fill="url(#cupG)"/><path d="M712.5 325.9L708.8 317.9L692.9 325.3L696.7 333.3z" fill="url(#cupG)"/><path d="M716.5 335.4L713.1 327.2L697.0 334.0L700.4 342.1z" fill="url(#cupG)"/><path d="M720.1 345.0L717.1 336.8L700.7 342.8L703.7 351.1z" fill="url(#cupG)"/><path d="M723.3 354.9L720.6 346.5L704.0 351.9L706.7 360.2z" fill="url(#cupG)"/><path d="M726.1 364.8L723.8 356.4L706.9 361.0L709.3 369.5z" fill="url(#cupG)"/><path d="M728.5 375.0L726.5 366.4L709.5 370.3L711.5 378.9z" fill="url(#cupG)"/><path d="M730.5 385.2L728.8 376.5L711.6 379.8L713.3 388.4z" fill="url(#cupG)"/><path d="M732.0 395.5L730.7 386.8L713.4 389.3L714.7 398.0z" fill="url(#cupG)"/><path d="M733.1 405.8L732.2 397.1L714.8 398.9L715.7 407.6z" fill="url(#cupG)"/><path d="M733.8 416.2L733.2 407.5L715.8 408.5L716.3 417.3z" fill="url(#cupG)"/><path d="M734.0 426.7L733.9 417.9L716.4 418.2L716.5 427.0z" fill="url(#cupG)"/></g><g><circle cx="728.4" cy="432.6" r="3.800" fill="url(#beadG)"/><circle cx="728.0" cy="442.8" r="3.800" fill="url(#beadG)"/><circle cx="727.2" cy="453.0" r="3.800" fill="url(#beadG)"/><circle cx="725.9" cy="463.1" r="3.800" fill="url(#beadG)"/><circle cx="724.2" cy="473.1" r="3.800" fill="url(#beadG)"/><circle cx="722.1" cy="483.1" r="3.800" fill="url(#beadG)"/><circle cx="719.6" cy="492.9" r="3.800" fill="url(#beadG)"/><circle cx="716.7" cy="502.6" r="3.800" fill="url(#beadG)"/><circle cx="713.4" cy="512.2" r="3.800" fill="url(#beadG)"/><circle cx="709.7" cy="521.6" r="3.800" fill="url(#beadG)"/><circle cx="705.7" cy="530.8" r="3.800" fill="url(#beadG)"/><circle cx="701.2" cy="539.8" r="3.800" fill="url(#beadG)"/><circle cx="696.4" cy="548.5" r="3.800" fill="url(#beadG)"/><circle cx="691.2" cy="557.1" r="3.800" fill="url(#beadG)"/><circle cx="685.7" cy="565.3" r="3.800" fill="url(#beadG)"/><circle cx="679.8" cy="573.3" r="3.800" fill="url(#beadG)"/><circle cx="673.6" cy="581.0" r="3.800" fill="url(#beadG)"/><circle cx="667.1" cy="588.4" r="3.800" fill="url(#beadG)"/><circle cx="660.3" cy="595.4" r="3.800" fill="url(#beadG)"/><circle cx="653.3" cy="602.1" r="3.800" fill="url(#beadG)"/><circle cx="645.9" cy="608.5" r="3.800" fill="url(#beadG)"/><circle cx="638.3" cy="614.5" r="3.800" fill="url(#beadG)"/><circle cx="630.5" cy="620.1" r="3.800" fill="url(#beadG)"/><circle cx="622.4" cy="625.4" r="3.800" fill="url(#beadG)"/><circle cx="614.1" cy="630.2" r="3.800" fill="url(#beadG)"/><circle cx="605.6" cy="634.6" r="3.800" fill="url(#beadG)"/><circle cx="597.0" cy="638.6" r="3.800" fill="url(#beadG)"/><circle cx="588.2" cy="642.2" r="3.800" fill="url(#beadG)"/><circle cx="579.3" cy="645.4" r="3.800" fill="url(#beadG)"/><circle cx="570.2" cy="648.1" r="3.800" fill="url(#beadG)"/><circle cx="561.0" cy="650.4" r="3.800" fill="url(#beadG)"/><circle cx="551.8" cy="652.2" r="3.800" fill="url(#beadG)"/><circle cx="542.5" cy="653.6" r="3.800" fill="url(#beadG)"/><circle cx="533.1" cy="654.5" r="3.800" fill="url(#beadG)"/><circle cx="523.7" cy="654.9" r="3.800" fill="url(#beadG)"/><circle cx="514.3" cy="654.9" r="3.800" fill="url(#beadG)"/><circle cx="504.9" cy="654.5" r="3.800" fill="url(#beadG)"/><circle cx="495.5" cy="653.6" r="3.800" fill="url(#beadG)"/><circle cx="486.2" cy="652.2" r="3.800" fill="url(#beadG)"/><circle cx="477.0" cy="650.4" r="3.800" fill="url(#beadG)"/><circle cx="467.8" cy="648.1" r="3.800" fill="url(#beadG)"/><circle cx="458.7" cy="645.4" r="3.800" fill="url(#beadG)"/><circle cx="449.8" cy="642.2" r="3.800" fill="url(#beadG)"/><circle cx="441.0" cy="638.6" r="3.800" fill="url(#beadG)"/><circle cx="432.4" cy="634.6" r="3.800" fill="url(#beadG)"/><circle cx="423.9" cy="630.2" r="3.800" fill="url(#beadG)"/><circle cx="415.6" cy="625.4" r="3.800" fill="url(#beadG)"/><circle cx="407.5" cy="620.1" r="3.800" fill="url(#beadG)"/><circle cx="399.7" cy="614.5" r="3.800" fill="url(#beadG)"/><circle cx="392.1" cy="608.5" r="3.800" fill="url(#beadG)"/><circle cx="384.7" cy="602.1" r="3.800" fill="url(#beadG)"/><circle cx="377.7" cy="595.4" r="3.800" fill="url(#beadG)"/><circle cx="370.9" cy="588.4" r="3.800" fill="url(#beadG)"/><circle cx="364.4" cy="581.0" r="3.800" fill="url(#beadG)"/><circle cx="358.2" cy="573.3" r="3.800" fill="url(#beadG)"/><circle cx="352.3" cy="565.3" r="3.800" fill="url(#beadG)"/><circle cx="346.8" cy="557.1" r="3.800" fill="url(#beadG)"/><circle cx="341.6" cy="548.5" r="3.800" fill="url(#beadG)"/><circle cx="336.8" cy="539.8" r="3.800" fill="url(#beadG)"/><circle cx="332.3" cy="530.8" r="3.800" fill="url(#beadG)"/><circle cx="328.3" cy="521.6" r="3.800" fill="url(#beadG)"/><circle cx="324.6" cy="512.2" r="3.800" fill="url(#beadG)"/><circle cx="321.3" cy="502.6" r="3.800" fill="url(#beadG)"/><circle cx="318.4" cy="492.9" r="3.800" fill="url(#beadG)"/><circle cx="315.9" cy="483.1" r="3.800" fill="url(#beadG)"/><circle cx="313.8" cy="473.1" r="3.800" fill="url(#beadG)"/><circle cx="312.1" cy="463.1" r="3.800" fill="url(#beadG)"/><circle cx="310.8" cy="453.0" r="3.800" fill="url(#beadG)"/><circle cx="310.0" cy="442.8" r="3.800" fill="url(#beadG)"/><circle cx="309.6" cy="432.6" r="3.800" fill="url(#beadG)"/><circle cx="309.6" cy="422.4" r="3.800" fill="url(#beadG)"/><circle cx="310.0" cy="412.2" r="3.800" fill="url(#beadG)"/><circle cx="310.8" cy="402.0" r="3.800" fill="url(#beadG)"/><circle cx="312.1" cy="391.9" r="3.800" fill="url(#beadG)"/><circle cx="313.8" cy="381.9" r="3.800" fill="url(#beadG)"/><circle cx="315.9" cy="371.9" r="3.800" fill="url(#beadG)"/><circle cx="318.4" cy="362.1" r="3.800" fill="url(#beadG)"/><circle cx="321.3" cy="352.4" r="3.800" fill="url(#beadG)"/><circle cx="324.6" cy="342.8" r="3.800" fill="url(#beadG)"/><circle cx="328.3" cy="333.4" r="3.800" fill="url(#beadG)"/><circle cx="332.3" cy="324.2" r="3.800" fill="url(#beadG)"/><circle cx="336.8" cy="315.2" r="3.800" fill="url(#beadG)"/><circle cx="341.6" cy="306.5" r="3.800" fill="url(#beadG)"/><circle cx="346.8" cy="297.9" r="3.800" fill="url(#beadG)"/><circle cx="352.3" cy="289.7" r="3.800" fill="url(#beadG)"/><circle cx="358.2" cy="281.7" r="3.800" fill="url(#beadG)"/><circle cx="364.4" cy="274.0" r="3.800" fill="url(#beadG)"/><circle cx="370.9" cy="266.6" r="3.800" fill="url(#beadG)"/><circle cx="377.7" cy="259.6" r="3.800" fill="url(#beadG)"/><circle cx="384.7" cy="252.9" r="3.800" fill="url(#beadG)"/><circle cx="392.1" cy="246.5" r="3.800" fill="url(#beadG)"/><circle cx="399.7" cy="240.5" r="3.800" fill="url(#beadG)"/><circle cx="407.5" cy="234.9" r="3.800" fill="url(#beadG)"/><circle cx="415.6" cy="229.6" r="3.800" fill="url(#beadG)"/><circle cx="423.9" cy="224.8" r="3.800" fill="url(#beadG)"/><circle cx="432.4" cy="220.4" r="3.800" fill="url(#beadG)"/><circle cx="441.0" cy="216.4" r="3.800" fill="url(#beadG)"/><circle cx="449.8" cy="212.8" r="3.800" fill="url(#beadG)"/><circle cx="458.7" cy="209.6" r="3.800" fill="url(#beadG)"/><circle cx="467.8" cy="206.9" r="3.800" fill="url(#beadG)"/><circle cx="477.0" cy="204.6" r="3.800" fill="url(#beadG)"/><circle cx="486.2" cy="202.8" r="3.800" fill="url(#beadG)"/><circle cx="495.5" cy="201.4" r="3.800" fill="url(#beadG)"/><circle cx="504.9" cy="200.5" r="3.800" fill="url(#beadG)"/><circle cx="514.3" cy="200.1" r="3.800" fill="url(#beadG)"/><circle cx="523.7" cy="200.1" r="3.800" fill="url(#beadG)"/><circle cx="533.1" cy="200.5" r="3.800" fill="url(#beadG)"/><circle cx="542.5" cy="201.4" r="3.800" fill="url(#beadG)"/><circle cx="551.8" cy="202.8" r="3.800" fill="url(#beadG)"/><circle cx="561.0" cy="204.6" r="3.800" fill="url(#beadG)"/><circle cx="570.2" cy="206.9" r="3.800" fill="url(#beadG)"/><circle cx="579.3" cy="209.6" r="3.800" fill="url(#beadG)"/><circle cx="588.2" cy="212.8" r="3.800" fill="url(#beadG)"/><circle cx="597.0" cy="216.4" r="3.800" fill="url(#beadG)"/><circle cx="605.6" cy="220.4" r="3.800" fill="url(#beadG)"/><circle cx="614.1" cy="224.8" r="3.800" fill="url(#beadG)"/><circle cx="622.4" cy="229.6" r="3.800" fill="url(#beadG)"/><circle cx="630.5" cy="234.9" r="3.800" fill="url(#beadG)"/><circle cx="638.3" cy="240.5" r="3.800" fill="url(#beadG)"/><circle cx="645.9" cy="246.5" r="3.800" fill="url(#beadG)"/><circle cx="653.3" cy="252.9" r="3.800" fill="url(#beadG)"/><circle cx="660.3" cy="259.6" r="3.800" fill="url(#beadG)"/><circle cx="667.1" cy="266.6" r="3.800" fill="url(#beadG)"/><circle cx="673.6" cy="274.0" r="3.800" fill="url(#beadG)"/><circle cx="679.8" cy="281.7" r="3.800" fill="url(#beadG)"/><circle cx="685.7" cy="289.7" r="3.800" fill="url(#beadG)"/><circle cx="691.2" cy="297.9" r="3.800" fill="url(#beadG)"/><circle cx="696.4" cy="306.5" r="3.800" fill="url(#beadG)"/><circle cx="701.2" cy="315.2" r="3.800" fill="url(#beadG)"/><circle cx="705.7" cy="324.2" r="3.800" fill="url(#beadG)"/><circle cx="709.7" cy="333.4" r="3.800" fill="url(#beadG)"/><circle cx="713.4" cy="342.8" r="3.800" fill="url(#beadG)"/><circle cx="716.7" cy="352.4" r="3.800" fill="url(#beadG)"/><circle cx="719.6" cy="362.1" r="3.800" fill="url(#beadG)"/><circle cx="722.1" cy="371.9" r="3.800" fill="url(#beadG)"/><circle cx="724.2" cy="381.9" r="3.800" fill="url(#beadG)"/><circle cx="725.9" cy="391.9" r="3.800" fill="url(#beadG)"/><circle cx="727.2" cy="402.0" r="3.800" fill="url(#beadG)"/><circle cx="728.0" cy="412.2" r="3.800" fill="url(#beadG)"/><circle cx="728.4" cy="422.4" r="3.800" fill="url(#beadG)"/></g></g><g stroke="#4cf8ff" stroke-width="1" shape-rendering="crispEdges"><path d="M58 165.5H979"/><path d="M58 255.5H979"/><path d="M58 427.5H979"/><path d="M262.5 126V728"/><path d="M271.5 126V728"/><path d="M518.5 126V728"/></g><circle cx="968.300" cy="241.200" r="37.300" fill="none" stroke="#000" stroke-width="1.400"/></svg>
</body></html>
